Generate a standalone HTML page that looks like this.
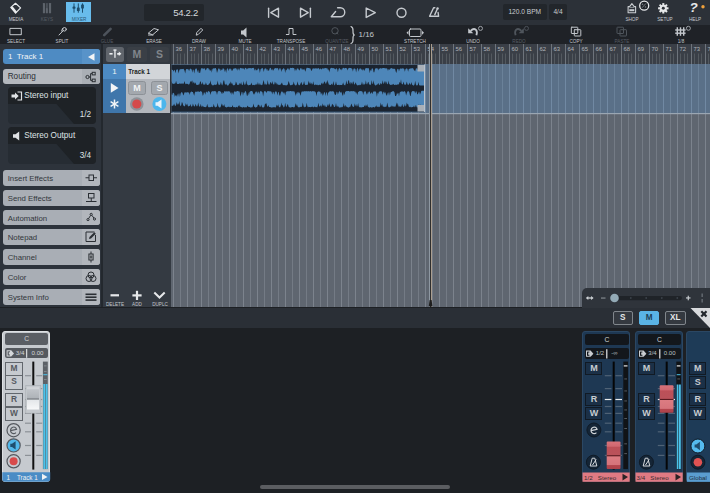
<!DOCTYPE html><html><head><meta charset="utf-8"><style>
*{margin:0;padding:0;box-sizing:border-box}
html,body{width:710px;height:493px;overflow:hidden;background:#1d2024;font-family:"Liberation Sans",sans-serif}
.a{position:absolute}
.lb{position:absolute;font-size:5.4px;color:#c3c7cc;text-align:center;width:40px;line-height:6px;white-space:nowrap;transform:scaleX(0.86)}
.dim{color:#575d65}
.box{position:absolute;background:#22262b;border-radius:2px;color:#c9cdd1;text-align:center;white-space:nowrap}
.ib{position:absolute;left:3px;width:96.7px;height:15.8px;background:#a9aeb5;border-radius:3px;color:#33373c;font-size:7.8px;line-height:17.4px;padding-left:4.7px;overflow:hidden}
.ib .ic{position:absolute;right:0;top:0;width:17.5px;height:100%;background:#b2b6bc}
.ib svg{position:absolute;right:3px;top:2px}
.rl{position:absolute;font-size:5.9px;color:#b0b5bb;top:45.2px;line-height:8px}
svg{position:absolute;overflow:visible}
</style></head><body>
<div class="a" style="left:0;top:0;width:710px;height:25px;background:#2c3138"></div>
<div class="a" style="left:66px;top:2px;width:25px;height:20px;background:#68bcec"></div>
<svg style="left:0;top:0" width="710" height="25" viewBox="0 0 710 25">
<g fill="#e8eaec">
 <path d="M15.5 3.3 L20.6 7.9 L15.6 13.2 L10.8 7.4 Z" fill="none" stroke="#e9ebed" stroke-width="1.2" stroke-linejoin="round"/>
 <path d="M10.8 7.4 L15.6 13.2 L17 11.7 L12.7 6.6 Z" fill="#e9ebed"/>
</g>
<g fill="#5d636b">
 <rect x="42.9" y="3.1" width="2.1" height="10.2" rx="0.5"/>
 <rect x="45.8" y="8" width="2.1" height="5.3" rx="0.5"/>
 <rect x="48.9" y="3.1" width="2.2" height="10.2" rx="0.5"/>
</g><rect x="45.8" y="3.1" width="2.1" height="4.9" fill="#4a5058"/>
<g fill="#1d4d6c">
 <rect x="73.5" y="3.4" width="1" height="9.3"/><rect x="77.8" y="3.4" width="1" height="9.3"/><rect x="82" y="3.4" width="1" height="9.3"/>
 <rect x="72.6" y="6.6" width="2.8" height="2.2" rx="0.6"/>
 <rect x="76.9" y="7.4" width="2.8" height="3.6" rx="0.6"/>
 <rect x="81.1" y="4.6" width="2.8" height="3.9" rx="0.6"/>
</g>
<g stroke="#c6cacf" stroke-width="1.4" fill="none" stroke-linejoin="round" stroke-linecap="round">
 <line x1="268.6" y1="8.2" x2="268.6" y2="17.2"/>
 <path d="M278.5 8.2 L270.8 12.7 L278.5 17.2 Z"/>
 <line x1="310.4" y1="8.2" x2="310.4" y2="17.2"/>
 <path d="M300.5 8.2 L308.2 12.7 L300.5 17.2 Z"/>
 <path d="M335.6 11.5 L331.3 16.7 L340.3 16.7 A4.45 4.45 0 0 0 340.3 7.8 L337.6 7.8"/>
 <path d="M366.2 8 L375.3 12.7 L366.2 17.4 Z"/>
 <circle cx="401.5" cy="12.7" r="4.5"/>
 <path d="M438.1 12.5 L438.6 16.3 L429.6 16.3 L433.6 7.7 L434.8 7.7"/>
 <line x1="434.8" y1="14.6" x2="437.4" y2="8.8"/>
</g>
<path d="M628.1 12.7 V6.6 H629.6 L631.9 3.6 L634.2 6.6 H635.6 V12.7 Z" stroke="#c9cdd1" stroke-width="1.1" fill="none" stroke-linejoin="round"/>
<rect x="629.3" y="9.2" width="5" height="2" fill="#c9cdd1"/><rect x="629.6" y="6.9" width="4.4" height="1" fill="#8a8f94"/>
<circle cx="644.2" cy="5.7" r="4.5" fill="#1f2328" stroke="#e6e8ea" stroke-width="1.3"/>
<path d="M642 7.8 L646 3.4" stroke="#7d8288" stroke-width="0.9"/>
<circle cx="642.5" cy="4.2" r="0.8" fill="#7d8288"/><circle cx="645.5" cy="7" r="0.8" fill="#7d8288"/>
<g transform="translate(663.3 8.3) scale(0.93)">
 <circle r="3.9" fill="#e6e8ea"/>
 <g fill="#e6e8ea"><rect x="-1.1" y="-5.6" width="2.2" height="11.2"/><rect x="-5.6" y="-1.1" width="11.2" height="2.2"/>
 <rect x="-1.1" y="-5.6" width="2.2" height="11.2" transform="rotate(45)"/><rect x="-1.1" y="-5.6" width="2.2" height="11.2" transform="rotate(-45)"/></g>
 <circle r="1.6" fill="#2c3138"/>
</g>
<circle cx="437.6" cy="8.4" r="1.2" fill="#c6cacf"/><circle cx="703" cy="6.8" r="1.7" fill="#f0a13c"/>
</svg>
<div class="a" style="left:689.6px;top:0px;font-size:13.5px;font-weight:bold;font-style:italic;color:#e6e8ea;line-height:16px">?</div>
<div class="lb " style="left:-4.5px;top:16px;">MEDIA</div>
<div class="lb dim" style="left:27px;top:16px;">KEYS</div>
<div class="lb " style="left:58.5px;top:16px;color:#2a5878">MIXER</div>
<div class="lb" style="left:612px;top:16px">SHOP</div>
<div class="lb" style="left:644.5px;top:16px">SETUP</div>
<div class="lb" style="left:674.5px;top:16px">HELP</div>
<div class="box" style="left:143.5px;top:3.7px;width:60px;height:17px;font-size:9.6px;letter-spacing:-0.35px;line-height:17.5px;text-align:right;padding-right:5.6px;color:#d6d9dc">54.2.2</div>
<div class="box" style="left:503px;top:3.7px;width:43.5px;height:16.5px;font-size:6.6px;line-height:16.5px">120.0 BPM</div>
<div class="box" style="left:549px;top:3.7px;width:18px;height:16.5px;font-size:6.6px;line-height:16.5px">4/4</div>
<div class="a" style="left:0;top:25px;width:710px;height:19px;background:#1f2227"></div>
<svg style="left:0;top:25px" width="710" height="19" viewBox="0 25 710 19">
<g stroke="#c3c7cc" stroke-width="1" fill="none" stroke-linejoin="round" stroke-linecap="round">
 <rect x="10.3" y="28.4" width="11" height="6.3"/>
 <circle cx="64.5" cy="29.3" r="1.8"/><line x1="63.3" y1="30.6" x2="59" y2="35"/><line x1="62.5" y1="28.6" x2="61.7" y2="31"/>
 <path d="M148.5 33 L154 28.5 L158.5 29.8 L153 34.5 Z"/><line x1="148.5" y1="35" x2="153" y2="35"/>
 <path d="M196.3 34.8 L196.8 32.5 L201 28.3 L202.7 30 L198.5 34.2 Z"/>
 <path d="M286.3 34.5 H289 V28.5 H293 V34.5 H296"/>
 <path d="M351 26.5 Q353.3 27.5 353 31 Q352.8 34.5 354.3 35 Q352.8 35.5 353 39 Q353.3 42.5 351 43.5" stroke-width="1.2"/>
 <rect x="409.5" y="29" width="11.5" height="7.5" rx="1"/>
 <rect x="571.3" y="27.2" width="6.5" height="6.3" rx="0.5"/><rect x="574.3" y="29.7" width="6.5" height="6.3" rx="0.5"/>
 <g stroke-width="1.4" stroke-linecap="butt"><line x1="677.3" y1="27.3" x2="677.3" y2="35.8"/><line x1="680.5" y1="27.3" x2="680.5" y2="35.8"/><line x1="683.7" y1="27.3" x2="683.7" y2="35.8"/>
 <line x1="675.2" y1="30" x2="685.6" y2="30"/><line x1="675.2" y1="33.2" x2="685.6" y2="33.2"/></g>
</g>
<path d="M20 34.8 L21.3 34.8 L21.3 33.5 Z" fill="#c3c7cc"/>
<path d="M468.2 28.3 L468.2 33.3 L473.3 33.3 Z" fill="#c3c7cc"/><path d="M470.6 30.9 Q473.6 27.8 476 29.9 Q477.6 31.7 476.4 35.3" stroke="#c3c7cc" stroke-width="1.8" fill="none"/>
<path d="M241 31 h2.2 l3.3 -3 v10 l-3.3 -3 h-2.2 z" fill="#c3c7cc" transform="translate(0 -0.5)"/>
<path d="M406.5 32.7 L408.5 30.7 L408.5 34.7 Z M424 32.7 L422 30.7 L422 34.7 Z" fill="#c3c7cc"/>
<g stroke="#4f555c" stroke-width="1" fill="none">
 <circle cx="335" cy="30.8" r="3.2"/><line x1="336.5" y1="32.5" x2="338" y2="34.3"/>
 <rect x="617" y="27.2" width="6.5" height="6.3" rx="0.5"/><rect x="620" y="29.7" width="6.5" height="6.3" rx="0.5"/>
</g>
<line x1="104.2" y1="35.2" x2="110.6" y2="28.8" stroke="#4d535b" stroke-width="2.6" stroke-linecap="round"/><path d="M523.8 28.3 L523.8 33.3 L518.7 33.3 Z" fill="#4f555c"/><path d="M521.4 30.9 Q518.4 27.8 516 29.9 Q514.4 31.7 515.6 35.3" stroke="#4f555c" stroke-width="1.8" fill="none"/>
<circle cx="480.5" cy="28.4" r="2" fill="none" stroke="#a9aeb3" stroke-width="0.9"/>
<circle cx="526.5" cy="28.4" r="2" fill="none" stroke="#4f555c" stroke-width="0.9"/>
<circle cx="688.4" cy="28.3" r="2" fill="none" stroke="#a9aeb3" stroke-width="0.9"/>
</svg>
<div class="a" style="left:358.5px;top:29.5px;font-size:8px;color:#c3c7cc;line-height:9px">1/16</div>
<div class="lb " style="left:-4.300000000000001px;top:37.5px">SELECT</div>
<div class="lb " style="left:41.7px;top:37.5px">SPLIT</div>
<div class="lb dim" style="left:87px;top:37.5px">GLUE</div>
<div class="lb " style="left:133.5px;top:37.5px">ERASE</div>
<div class="lb " style="left:179px;top:37.5px">DRAW</div>
<div class="lb " style="left:225px;top:37.5px">MUTE</div>
<div class="lb " style="left:271px;top:37.5px">TRANSPOSE</div>
<div class="lb dim" style="left:317px;top:37.5px">QUANTIZE</div>
<div class="lb " style="left:395px;top:37.5px">STRETCH</div>
<div class="lb " style="left:452.7px;top:37.5px">UNDO</div>
<div class="lb dim" style="left:499px;top:37.5px">REDO</div>
<div class="lb " style="left:556.2px;top:37.5px">COPY</div>
<div class="lb dim" style="left:602px;top:37.5px">PASTE</div>
<div class="lb " style="left:660.5px;top:37.5px">1/8</div>
<div class="a" style="left:0;top:44px;width:103px;height:263px;background:#2d333b"></div>
<div class="a" style="left:101px;top:44px;width:2px;height:263px;background:#23282e"></div>
<div class="a" style="left:3px;top:48.6px;width:96.7px;height:15.6px;background:#4e8bc3;border-radius:3px;overflow:hidden"><div class="a" style="left:79.2px;top:0;width:17.5px;height:100%;background:#5893c9"></div><div class="a" style="left:5px;top:0;font-size:8px;line-height:15.6px;color:#f2f4f6">1&nbsp; Track 1</div><svg style="left:83.5px;top:4px" width="10" height="9"><path d="M1 4 L7.5 0.3 L7.5 7.7 Z" fill="#f2f4f6"/></svg></div>
<div class="ib" style="top:68.5px;background:#b4b8be;line-height:15.6px;font-size:8.2px;color:#2b2f34">Routing<div class="ic" style="background:#aaafb5"></div><svg width="12" height="12" style="right:3px;top:2px"><g stroke="#2b2f34" stroke-width="1" fill="none"><circle cx="2.5" cy="6" r="1.6"/><rect x="7.2" y="1.3" width="3" height="2.6"/><rect x="7.2" y="8.1" width="3" height="2.6"/><path d="M4.1 6 H5.6 M5.6 2.6 V9.4 M5.6 2.6 H7.2 M5.6 9.4 H7.2"/></g></svg></div>
<div class="a" style="left:7.7px;top:86.5px;width:88.8px;height:37px;background:#262c33;border-radius:4px;overflow:hidden"><div class="a" style="left:0;top:0;width:100%;height:17.2px;background:#1e2226"></div><svg style="left:0;top:0" width="89" height="37"><path d="M48.5 17 L89 17 L89 37 L66 37 Z" fill="#1e2226"/></svg><div class="a" style="left:16.5px;top:0;font-size:8.2px;line-height:17.2px;color:#dfe2e5">Stereo input</div><div class="a" style="left:72px;top:22.5px;font-size:8.2px;line-height:11px;color:#dfe2e5">1/2</div>
<svg style="left:3.5px;top:4px" width="12" height="10"><g fill="none" stroke="#dfe2e5" stroke-width="1.2"><path d="M6.5 1 H10.5 V9 H6.5"/></g><path d="M0.5 3.5 H4 V1.5 L7.7 5 L4 8.5 V6.5 H0.5 Z" fill="#dfe2e5"/></svg>
</div>
<div class="a" style="left:7.7px;top:127.3px;width:88.8px;height:37px;background:#262c33;border-radius:4px;overflow:hidden"><div class="a" style="left:0;top:0;width:100%;height:17.2px;background:#1e2226"></div><svg style="left:0;top:0" width="89" height="37"><path d="M48.5 17 L89 17 L89 37 L66 37 Z" fill="#1e2226"/></svg><div class="a" style="left:16.5px;top:0;font-size:8.2px;line-height:17.2px;color:#dfe2e5">Stereo Output</div><div class="a" style="left:72px;top:22.5px;font-size:8.2px;line-height:11px;color:#dfe2e5">3/4</div>
<svg style="left:4px;top:3.5px" width="10" height="10"><path d="M1 3.3 H3.5 L7.2 0.5 V9.5 L3.5 6.7 H1 Z" fill="#dfe2e5"/></svg>
</div>
<div class="ib" style="top:170.0px">Insert Effects<div class="ic"></div><svg width="12" height="12" style="right:3px;top:2px"><g stroke="#2b2f34" stroke-width="1" fill="none"><rect x="4" y="3" width="4.5" height="5.5"/><line x1="0.5" y1="5.75" x2="4" y2="5.75"/><line x1="8.5" y1="5.75" x2="12" y2="5.75"/></g></svg></div>
<div class="ib" style="top:189.8px">Send Effects<div class="ic"></div><svg width="12" height="12" style="right:3px;top:2px"><g stroke="#2b2f34" stroke-width="1" fill="none"><rect x="3.5" y="1.5" width="5.5" height="4.5"/><line x1="6.25" y1="6" x2="6.25" y2="9"/><line x1="1" y1="9.5" x2="11.5" y2="9.5"/></g></svg></div>
<div class="ib" style="top:209.6px">Automation<div class="ic"></div><svg width="12" height="12" style="right:3px;top:2px"><g stroke="#2b2f34" stroke-width="1" fill="none"><circle cx="3" cy="7.6" r="1.1"/><circle cx="6.2" cy="2.4" r="1.1"/><circle cx="9.5" cy="7" r="1.1"/><line x1="3.6" y1="6.6" x2="5.6" y2="3.4"/><line x1="6.9" y1="3.3" x2="8.9" y2="6.1"/></g></svg></div>
<div class="ib" style="top:229.4px">Notepad<div class="ic"></div><svg width="12" height="12" style="right:3px;top:2px"><g stroke="#2b2f34" stroke-width="1" fill="none"><path d="M9.5 1 H1 V10.5 H10.5 V4"/></g><path d="M4 8 L4.5 6 L9.3 1.2 L10.8 2.7 L6 7.5 Z" fill="#2b2f34"/></svg></div>
<div class="ib" style="top:249.2px">Channel<div class="ic"></div><svg width="12" height="12" style="right:3px;top:2px"><g stroke="#2b2f34" stroke-width="1" fill="none"><rect x="3.9" y="3" width="4.2" height="6"/><line x1="6" y1="0.5" x2="6" y2="3"/><line x1="6" y1="9" x2="6" y2="11.5"/><rect x="5.2" y="5" width="1.6" height="2" stroke-width="0.7"/></g></svg></div>
<div class="ib" style="top:269.0px">Color<div class="ic"></div><svg width="12" height="12" style="right:3px;top:2px"><g stroke="#2b2f34" stroke-width="1" fill="none"><circle cx="6" cy="4" r="3"/><circle cx="4" cy="7.5" r="3"/><circle cx="8" cy="7.5" r="3"/></g></svg></div>
<div class="ib" style="top:288.8px">System Info<div class="ic"></div><svg width="12" height="12" style="right:3px;top:2px"><g fill="#2b2f34"><rect x="0.5" y="2.5" width="11" height="1.6"/><rect x="0.5" y="5.4" width="11" height="1.6"/><rect x="0.5" y="8.3" width="11" height="1.6"/></g></svg></div>
<div class="a" style="left:103px;top:44px;width:68px;height:263px;background:#343a42"></div>
<div class="a" style="left:105.5px;top:47.3px;width:18.4px;height:14.6px;background:#60656c;border-radius:2.5px"></div>
<svg style="left:105.5px;top:47.3px" width="19" height="15"><g fill="#eef0f2"><rect x="3.4" y="6" width="3.2" height="1.6"/><rect x="8.3" y="2.6" width="1.3" height="8.2"/><rect x="7.3" y="2.5" width="3.3" height="1.1"/><path d="M11.2 5.9 H12.8 V4.6 L15.4 6.8 L12.8 9 V7.7 H11.2 Z"/></g></svg>
<div class="a" style="left:127.4px;top:47.3px;width:19.2px;height:14.6px;background:#3a3f46;border-radius:2.5px;color:#80858b;font-size:10.5px;font-weight:bold;text-align:center;line-height:14.6px">M</div>
<div class="a" style="left:149.8px;top:47.3px;width:19.2px;height:14.6px;background:#3a3f46;border-radius:2.5px;color:#80858b;font-size:10.5px;font-weight:bold;text-align:center;line-height:14.6px">S</div>
<div class="a" style="left:103px;top:64px;width:23px;height:49px;background:#3f76ab"></div>
<div class="a" style="left:103px;top:64px;width:23px;height:15px;background:#4c8ac3;color:#f0f2f4;font-size:8px;text-align:center;line-height:15px">1</div>
<div class="a" style="left:126px;top:64px;width:44px;height:49px;background:#b3b7bd"></div>
<div class="a" style="left:126px;top:64px;width:44px;height:15px;background:#d2d5d9;color:#1b1e22;font-size:6.3px;font-weight:bold;line-height:15px;padding-left:2.3px">Track 1</div>
<svg style="left:103px;top:64px" width="23" height="49"><path d="M7.8 19 L15.5 23.9 L7.8 28.8 Z" fill="#f2f4f6"/><g stroke="#f2f4f6" stroke-width="1.5"><line x1="11.5" y1="35.5" x2="11.5" y2="44.5"/><line x1="7.6" y1="37.7" x2="15.4" y2="42.3"/><line x1="7.6" y1="42.3" x2="15.4" y2="37.7"/></g></svg>
<div class="a" style="left:128.2px;top:80.5px;width:17.8px;height:14.3px;background:#a3a8ae;border:1px solid #8c9197;border-radius:2.5px;color:#f0f2f4;font-size:9px;font-weight:bold;text-align:center;line-height:12.5px">M</div>
<div class="a" style="left:150.5px;top:80.5px;width:17.8px;height:14.3px;background:#a3a8ae;border:1px solid #8c9197;border-radius:2.5px;color:#f0f2f4;font-size:9px;font-weight:bold;text-align:center;line-height:12.5px">S</div>
<svg style="left:126px;top:94px" width="45" height="19"><circle cx="10.8" cy="10" r="6.8" fill="#8d9298"/><circle cx="10.8" cy="10" r="4.6" fill="#d44a4a"/><circle cx="33.4" cy="10" r="7" fill="#4cb6ec"/><path d="M29.5 8.3 H31.5 L35.5 5.5 V14.5 L31.5 11.7 H29.5 Z" fill="#e9f4fb"/></svg>
<svg style="left:103px;top:285px" width="68" height="22"><g fill="#e6e8ea">
<rect x="7.5" y="9.2" width="8.5" height="2.2"/>
<rect x="29.4" y="9.3" width="9.2" height="2.2"/><rect x="32.9" y="5.8" width="2.2" height="9.2"/>
</g><path d="M51.3 7.5 L56.5 12.5 L61.7 7.5" stroke="#e6e8ea" stroke-width="2" fill="none"/></svg>
<div class="lb" style="left:94.8px;top:300.5px">DELETE</div>
<div class="lb" style="left:116.9px;top:300.5px">ADD</div>
<div class="lb" style="left:139.6px;top:300.5px">DUPLC</div>
<div class="a" style="left:171px;top:44px;width:539px;height:20px;background:#3a3f47"></div>
<div class="a" style="left:171px;top:64px;width:539px;height:243px;background:#5f6670"></div>
<div class="a" style="left:171px;top:64px;width:539px;height:49px;background:#5a7088"></div>
<svg style="left:0;top:0" width="710" height="493" viewBox="0 0 710 493">
<rect x="170" y="44" width="1.3" height="20" fill="#2f343b"/>
<rect x="173" y="44" width="1" height="20" fill="#6e747c"/>
<rect x="177" y="53.5" width="1" height="10.5" fill="#53595f"/>
<rect x="180" y="53.5" width="1" height="10.5" fill="#53595f"/>
<rect x="184" y="53.5" width="1" height="10.5" fill="#53595f"/>
<rect x="187" y="44" width="1" height="20" fill="#6e747c"/>
<rect x="191" y="53.5" width="1" height="10.5" fill="#53595f"/>
<rect x="194" y="53.5" width="1" height="10.5" fill="#53595f"/>
<rect x="198" y="53.5" width="1" height="10.5" fill="#53595f"/>
<rect x="201" y="44" width="1" height="20" fill="#6e747c"/>
<rect x="205" y="53.5" width="1" height="10.5" fill="#53595f"/>
<rect x="208" y="53.5" width="1" height="10.5" fill="#53595f"/>
<rect x="212" y="53.5" width="1" height="10.5" fill="#53595f"/>
<rect x="215" y="44" width="1" height="20" fill="#6e747c"/>
<rect x="219" y="53.5" width="1" height="10.5" fill="#53595f"/>
<rect x="222" y="53.5" width="1" height="10.5" fill="#53595f"/>
<rect x="226" y="53.5" width="1" height="10.5" fill="#53595f"/>
<rect x="229" y="44" width="1" height="20" fill="#6e747c"/>
<rect x="233" y="53.5" width="1" height="10.5" fill="#53595f"/>
<rect x="236" y="53.5" width="1" height="10.5" fill="#53595f"/>
<rect x="240" y="53.5" width="1" height="10.5" fill="#53595f"/>
<rect x="243" y="44" width="1" height="20" fill="#6e747c"/>
<rect x="247" y="53.5" width="1" height="10.5" fill="#53595f"/>
<rect x="250" y="53.5" width="1" height="10.5" fill="#53595f"/>
<rect x="254" y="53.5" width="1" height="10.5" fill="#53595f"/>
<rect x="257" y="44" width="1" height="20" fill="#6e747c"/>
<rect x="261" y="53.5" width="1" height="10.5" fill="#53595f"/>
<rect x="264" y="53.5" width="1" height="10.5" fill="#53595f"/>
<rect x="268" y="53.5" width="1" height="10.5" fill="#53595f"/>
<rect x="271" y="44" width="1" height="20" fill="#6e747c"/>
<rect x="275" y="53.5" width="1" height="10.5" fill="#53595f"/>
<rect x="278" y="53.5" width="1" height="10.5" fill="#53595f"/>
<rect x="282" y="53.5" width="1" height="10.5" fill="#53595f"/>
<rect x="285" y="44" width="1" height="20" fill="#6e747c"/>
<rect x="289" y="53.5" width="1" height="10.5" fill="#53595f"/>
<rect x="292" y="53.5" width="1" height="10.5" fill="#53595f"/>
<rect x="296" y="53.5" width="1" height="10.5" fill="#53595f"/>
<rect x="299" y="44" width="1" height="20" fill="#6e747c"/>
<rect x="303" y="53.5" width="1" height="10.5" fill="#53595f"/>
<rect x="306" y="53.5" width="1" height="10.5" fill="#53595f"/>
<rect x="310" y="53.5" width="1" height="10.5" fill="#53595f"/>
<rect x="313" y="44" width="1" height="20" fill="#6e747c"/>
<rect x="316" y="53.5" width="1" height="10.5" fill="#53595f"/>
<rect x="320" y="53.5" width="1" height="10.5" fill="#53595f"/>
<rect x="323" y="53.5" width="1" height="10.5" fill="#53595f"/>
<rect x="327" y="44" width="1" height="20" fill="#6e747c"/>
<rect x="330" y="53.5" width="1" height="10.5" fill="#53595f"/>
<rect x="334" y="53.5" width="1" height="10.5" fill="#53595f"/>
<rect x="337" y="53.5" width="1" height="10.5" fill="#53595f"/>
<rect x="341" y="44" width="1" height="20" fill="#6e747c"/>
<rect x="344" y="53.5" width="1" height="10.5" fill="#53595f"/>
<rect x="348" y="53.5" width="1" height="10.5" fill="#53595f"/>
<rect x="351" y="53.5" width="1" height="10.5" fill="#53595f"/>
<rect x="355" y="44" width="1" height="20" fill="#6e747c"/>
<rect x="358" y="53.5" width="1" height="10.5" fill="#53595f"/>
<rect x="362" y="53.5" width="1" height="10.5" fill="#53595f"/>
<rect x="365" y="53.5" width="1" height="10.5" fill="#53595f"/>
<rect x="369" y="44" width="1" height="20" fill="#6e747c"/>
<rect x="372" y="53.5" width="1" height="10.5" fill="#53595f"/>
<rect x="376" y="53.5" width="1" height="10.5" fill="#53595f"/>
<rect x="379" y="53.5" width="1" height="10.5" fill="#53595f"/>
<rect x="383" y="44" width="1" height="20" fill="#6e747c"/>
<rect x="386" y="53.5" width="1" height="10.5" fill="#53595f"/>
<rect x="390" y="53.5" width="1" height="10.5" fill="#53595f"/>
<rect x="393" y="53.5" width="1" height="10.5" fill="#53595f"/>
<rect x="397" y="44" width="1" height="20" fill="#6e747c"/>
<rect x="400" y="53.5" width="1" height="10.5" fill="#53595f"/>
<rect x="404" y="53.5" width="1" height="10.5" fill="#53595f"/>
<rect x="407" y="53.5" width="1" height="10.5" fill="#53595f"/>
<rect x="411" y="44" width="1" height="20" fill="#6e747c"/>
<rect x="414" y="53.5" width="1" height="10.5" fill="#53595f"/>
<rect x="418" y="53.5" width="1" height="10.5" fill="#53595f"/>
<rect x="421" y="53.5" width="1" height="10.5" fill="#53595f"/>
<rect x="425" y="44" width="1" height="20" fill="#6e747c"/>
<rect x="428" y="53.5" width="1" height="10.5" fill="#53595f"/>
<rect x="432" y="53.5" width="1" height="10.5" fill="#53595f"/>
<rect x="435" y="53.5" width="1" height="10.5" fill="#53595f"/>
<rect x="439" y="44" width="1" height="20" fill="#6e747c"/>
<rect x="442" y="53.5" width="1" height="10.5" fill="#53595f"/>
<rect x="446" y="53.5" width="1" height="10.5" fill="#53595f"/>
<rect x="449" y="53.5" width="1" height="10.5" fill="#53595f"/>
<rect x="453" y="44" width="1" height="20" fill="#6e747c"/>
<rect x="456" y="53.5" width="1" height="10.5" fill="#53595f"/>
<rect x="460" y="53.5" width="1" height="10.5" fill="#53595f"/>
<rect x="463" y="53.5" width="1" height="10.5" fill="#53595f"/>
<rect x="467" y="44" width="1" height="20" fill="#6e747c"/>
<rect x="470" y="53.5" width="1" height="10.5" fill="#53595f"/>
<rect x="474" y="53.5" width="1" height="10.5" fill="#53595f"/>
<rect x="477" y="53.5" width="1" height="10.5" fill="#53595f"/>
<rect x="481" y="44" width="1" height="20" fill="#6e747c"/>
<rect x="484" y="53.5" width="1" height="10.5" fill="#53595f"/>
<rect x="488" y="53.5" width="1" height="10.5" fill="#53595f"/>
<rect x="491" y="53.5" width="1" height="10.5" fill="#53595f"/>
<rect x="495" y="44" width="1" height="20" fill="#6e747c"/>
<rect x="498" y="53.5" width="1" height="10.5" fill="#53595f"/>
<rect x="502" y="53.5" width="1" height="10.5" fill="#53595f"/>
<rect x="505" y="53.5" width="1" height="10.5" fill="#53595f"/>
<rect x="509" y="44" width="1" height="20" fill="#6e747c"/>
<rect x="512" y="53.5" width="1" height="10.5" fill="#53595f"/>
<rect x="516" y="53.5" width="1" height="10.5" fill="#53595f"/>
<rect x="519" y="53.5" width="1" height="10.5" fill="#53595f"/>
<rect x="523" y="44" width="1" height="20" fill="#6e747c"/>
<rect x="526" y="53.5" width="1" height="10.5" fill="#53595f"/>
<rect x="530" y="53.5" width="1" height="10.5" fill="#53595f"/>
<rect x="533" y="53.5" width="1" height="10.5" fill="#53595f"/>
<rect x="537" y="44" width="1" height="20" fill="#6e747c"/>
<rect x="540" y="53.5" width="1" height="10.5" fill="#53595f"/>
<rect x="544" y="53.5" width="1" height="10.5" fill="#53595f"/>
<rect x="547" y="53.5" width="1" height="10.5" fill="#53595f"/>
<rect x="551" y="44" width="1" height="20" fill="#6e747c"/>
<rect x="554" y="53.5" width="1" height="10.5" fill="#53595f"/>
<rect x="558" y="53.5" width="1" height="10.5" fill="#53595f"/>
<rect x="561" y="53.5" width="1" height="10.5" fill="#53595f"/>
<rect x="565" y="44" width="1" height="20" fill="#6e747c"/>
<rect x="568" y="53.5" width="1" height="10.5" fill="#53595f"/>
<rect x="572" y="53.5" width="1" height="10.5" fill="#53595f"/>
<rect x="575" y="53.5" width="1" height="10.5" fill="#53595f"/>
<rect x="579" y="44" width="1" height="20" fill="#6e747c"/>
<rect x="582" y="53.5" width="1" height="10.5" fill="#53595f"/>
<rect x="586" y="53.5" width="1" height="10.5" fill="#53595f"/>
<rect x="589" y="53.5" width="1" height="10.5" fill="#53595f"/>
<rect x="593" y="44" width="1" height="20" fill="#6e747c"/>
<rect x="596" y="53.5" width="1" height="10.5" fill="#53595f"/>
<rect x="600" y="53.5" width="1" height="10.5" fill="#53595f"/>
<rect x="603" y="53.5" width="1" height="10.5" fill="#53595f"/>
<rect x="607" y="44" width="1" height="20" fill="#6e747c"/>
<rect x="610" y="53.5" width="1" height="10.5" fill="#53595f"/>
<rect x="614" y="53.5" width="1" height="10.5" fill="#53595f"/>
<rect x="617" y="53.5" width="1" height="10.5" fill="#53595f"/>
<rect x="621" y="44" width="1" height="20" fill="#6e747c"/>
<rect x="624" y="53.5" width="1" height="10.5" fill="#53595f"/>
<rect x="628" y="53.5" width="1" height="10.5" fill="#53595f"/>
<rect x="631" y="53.5" width="1" height="10.5" fill="#53595f"/>
<rect x="635" y="44" width="1" height="20" fill="#6e747c"/>
<rect x="638" y="53.5" width="1" height="10.5" fill="#53595f"/>
<rect x="642" y="53.5" width="1" height="10.5" fill="#53595f"/>
<rect x="645" y="53.5" width="1" height="10.5" fill="#53595f"/>
<rect x="649" y="44" width="1" height="20" fill="#6e747c"/>
<rect x="652" y="53.5" width="1" height="10.5" fill="#53595f"/>
<rect x="656" y="53.5" width="1" height="10.5" fill="#53595f"/>
<rect x="659" y="53.5" width="1" height="10.5" fill="#53595f"/>
<rect x="663" y="44" width="1" height="20" fill="#6e747c"/>
<rect x="666" y="53.5" width="1" height="10.5" fill="#53595f"/>
<rect x="670" y="53.5" width="1" height="10.5" fill="#53595f"/>
<rect x="673" y="53.5" width="1" height="10.5" fill="#53595f"/>
<rect x="677" y="44" width="1" height="20" fill="#6e747c"/>
<rect x="680" y="53.5" width="1" height="10.5" fill="#53595f"/>
<rect x="684" y="53.5" width="1" height="10.5" fill="#53595f"/>
<rect x="687" y="53.5" width="1" height="10.5" fill="#53595f"/>
<rect x="691" y="44" width="1" height="20" fill="#6e747c"/>
<rect x="694" y="53.5" width="1" height="10.5" fill="#53595f"/>
<rect x="698" y="53.5" width="1" height="10.5" fill="#53595f"/>
<rect x="701" y="53.5" width="1" height="10.5" fill="#53595f"/>
<rect x="705" y="44" width="1" height="20" fill="#6e747c"/>
<rect x="708" y="53.5" width="1" height="10.5" fill="#53595f"/>
<rect x="712" y="53.5" width="1" height="10.5" fill="#53595f"/>
<rect x="715" y="53.5" width="1" height="10.5" fill="#53595f"/>
<rect x="173" y="64" width="1" height="49" fill="#7189a3"/>
<rect x="173" y="113" width="1" height="194" fill="#7c838d"/>
<rect x="180" y="64" width="1" height="49" fill="#6a8199"/>
<rect x="180" y="113" width="1" height="194" fill="#747b85"/>
<rect x="187" y="64" width="1" height="49" fill="#7189a3"/>
<rect x="187" y="113" width="1" height="194" fill="#7c838d"/>
<rect x="194" y="64" width="1" height="49" fill="#6a8199"/>
<rect x="194" y="113" width="1" height="194" fill="#747b85"/>
<rect x="201" y="64" width="1" height="49" fill="#7189a3"/>
<rect x="201" y="113" width="1" height="194" fill="#7c838d"/>
<rect x="208" y="64" width="1" height="49" fill="#6a8199"/>
<rect x="208" y="113" width="1" height="194" fill="#747b85"/>
<rect x="215" y="64" width="1" height="49" fill="#7189a3"/>
<rect x="215" y="113" width="1" height="194" fill="#7c838d"/>
<rect x="222" y="64" width="1" height="49" fill="#6a8199"/>
<rect x="222" y="113" width="1" height="194" fill="#747b85"/>
<rect x="229" y="64" width="1" height="49" fill="#7189a3"/>
<rect x="229" y="113" width="1" height="194" fill="#7c838d"/>
<rect x="236" y="64" width="1" height="49" fill="#6a8199"/>
<rect x="236" y="113" width="1" height="194" fill="#747b85"/>
<rect x="243" y="64" width="1" height="49" fill="#7189a3"/>
<rect x="243" y="113" width="1" height="194" fill="#7c838d"/>
<rect x="250" y="64" width="1" height="49" fill="#6a8199"/>
<rect x="250" y="113" width="1" height="194" fill="#747b85"/>
<rect x="257" y="64" width="1" height="49" fill="#7189a3"/>
<rect x="257" y="113" width="1" height="194" fill="#7c838d"/>
<rect x="264" y="64" width="1" height="49" fill="#6a8199"/>
<rect x="264" y="113" width="1" height="194" fill="#747b85"/>
<rect x="271" y="64" width="1" height="49" fill="#7189a3"/>
<rect x="271" y="113" width="1" height="194" fill="#7c838d"/>
<rect x="278" y="64" width="1" height="49" fill="#6a8199"/>
<rect x="278" y="113" width="1" height="194" fill="#747b85"/>
<rect x="285" y="64" width="1" height="49" fill="#7189a3"/>
<rect x="285" y="113" width="1" height="194" fill="#7c838d"/>
<rect x="292" y="64" width="1" height="49" fill="#6a8199"/>
<rect x="292" y="113" width="1" height="194" fill="#747b85"/>
<rect x="299" y="64" width="1" height="49" fill="#7189a3"/>
<rect x="299" y="113" width="1" height="194" fill="#7c838d"/>
<rect x="306" y="64" width="1" height="49" fill="#6a8199"/>
<rect x="306" y="113" width="1" height="194" fill="#747b85"/>
<rect x="313" y="64" width="1" height="49" fill="#7189a3"/>
<rect x="313" y="113" width="1" height="194" fill="#7c838d"/>
<rect x="320" y="64" width="1" height="49" fill="#6a8199"/>
<rect x="320" y="113" width="1" height="194" fill="#747b85"/>
<rect x="327" y="64" width="1" height="49" fill="#7189a3"/>
<rect x="327" y="113" width="1" height="194" fill="#7c838d"/>
<rect x="334" y="64" width="1" height="49" fill="#6a8199"/>
<rect x="334" y="113" width="1" height="194" fill="#747b85"/>
<rect x="341" y="64" width="1" height="49" fill="#7189a3"/>
<rect x="341" y="113" width="1" height="194" fill="#7c838d"/>
<rect x="348" y="64" width="1" height="49" fill="#6a8199"/>
<rect x="348" y="113" width="1" height="194" fill="#747b85"/>
<rect x="355" y="64" width="1" height="49" fill="#7189a3"/>
<rect x="355" y="113" width="1" height="194" fill="#7c838d"/>
<rect x="362" y="64" width="1" height="49" fill="#6a8199"/>
<rect x="362" y="113" width="1" height="194" fill="#747b85"/>
<rect x="369" y="64" width="1" height="49" fill="#7189a3"/>
<rect x="369" y="113" width="1" height="194" fill="#7c838d"/>
<rect x="376" y="64" width="1" height="49" fill="#6a8199"/>
<rect x="376" y="113" width="1" height="194" fill="#747b85"/>
<rect x="383" y="64" width="1" height="49" fill="#7189a3"/>
<rect x="383" y="113" width="1" height="194" fill="#7c838d"/>
<rect x="390" y="64" width="1" height="49" fill="#6a8199"/>
<rect x="390" y="113" width="1" height="194" fill="#747b85"/>
<rect x="397" y="64" width="1" height="49" fill="#7189a3"/>
<rect x="397" y="113" width="1" height="194" fill="#7c838d"/>
<rect x="404" y="64" width="1" height="49" fill="#6a8199"/>
<rect x="404" y="113" width="1" height="194" fill="#747b85"/>
<rect x="411" y="64" width="1" height="49" fill="#7189a3"/>
<rect x="411" y="113" width="1" height="194" fill="#7c838d"/>
<rect x="418" y="64" width="1" height="49" fill="#6a8199"/>
<rect x="418" y="113" width="1" height="194" fill="#747b85"/>
<rect x="425" y="64" width="1" height="49" fill="#7189a3"/>
<rect x="425" y="113" width="1" height="194" fill="#7c838d"/>
<rect x="432" y="64" width="1" height="49" fill="#6a8199"/>
<rect x="432" y="113" width="1" height="194" fill="#747b85"/>
<rect x="439" y="64" width="1" height="49" fill="#7189a3"/>
<rect x="439" y="113" width="1" height="194" fill="#7c838d"/>
<rect x="446" y="64" width="1" height="49" fill="#6a8199"/>
<rect x="446" y="113" width="1" height="194" fill="#747b85"/>
<rect x="453" y="64" width="1" height="49" fill="#7189a3"/>
<rect x="453" y="113" width="1" height="194" fill="#7c838d"/>
<rect x="460" y="64" width="1" height="49" fill="#6a8199"/>
<rect x="460" y="113" width="1" height="194" fill="#747b85"/>
<rect x="467" y="64" width="1" height="49" fill="#7189a3"/>
<rect x="467" y="113" width="1" height="194" fill="#7c838d"/>
<rect x="474" y="64" width="1" height="49" fill="#6a8199"/>
<rect x="474" y="113" width="1" height="194" fill="#747b85"/>
<rect x="481" y="64" width="1" height="49" fill="#7189a3"/>
<rect x="481" y="113" width="1" height="194" fill="#7c838d"/>
<rect x="488" y="64" width="1" height="49" fill="#6a8199"/>
<rect x="488" y="113" width="1" height="194" fill="#747b85"/>
<rect x="495" y="64" width="1" height="49" fill="#7189a3"/>
<rect x="495" y="113" width="1" height="194" fill="#7c838d"/>
<rect x="502" y="64" width="1" height="49" fill="#6a8199"/>
<rect x="502" y="113" width="1" height="194" fill="#747b85"/>
<rect x="509" y="64" width="1" height="49" fill="#7189a3"/>
<rect x="509" y="113" width="1" height="194" fill="#7c838d"/>
<rect x="516" y="64" width="1" height="49" fill="#6a8199"/>
<rect x="516" y="113" width="1" height="194" fill="#747b85"/>
<rect x="523" y="64" width="1" height="49" fill="#7189a3"/>
<rect x="523" y="113" width="1" height="194" fill="#7c838d"/>
<rect x="530" y="64" width="1" height="49" fill="#6a8199"/>
<rect x="530" y="113" width="1" height="194" fill="#747b85"/>
<rect x="537" y="64" width="1" height="49" fill="#7189a3"/>
<rect x="537" y="113" width="1" height="194" fill="#7c838d"/>
<rect x="544" y="64" width="1" height="49" fill="#6a8199"/>
<rect x="544" y="113" width="1" height="194" fill="#747b85"/>
<rect x="551" y="64" width="1" height="49" fill="#7189a3"/>
<rect x="551" y="113" width="1" height="194" fill="#7c838d"/>
<rect x="558" y="64" width="1" height="49" fill="#6a8199"/>
<rect x="558" y="113" width="1" height="194" fill="#747b85"/>
<rect x="565" y="64" width="1" height="49" fill="#7189a3"/>
<rect x="565" y="113" width="1" height="194" fill="#7c838d"/>
<rect x="572" y="64" width="1" height="49" fill="#6a8199"/>
<rect x="572" y="113" width="1" height="194" fill="#747b85"/>
<rect x="579" y="64" width="1" height="49" fill="#7189a3"/>
<rect x="579" y="113" width="1" height="194" fill="#7c838d"/>
<rect x="586" y="64" width="1" height="49" fill="#6a8199"/>
<rect x="586" y="113" width="1" height="194" fill="#747b85"/>
<rect x="593" y="64" width="1" height="49" fill="#7189a3"/>
<rect x="593" y="113" width="1" height="194" fill="#7c838d"/>
<rect x="600" y="64" width="1" height="49" fill="#6a8199"/>
<rect x="600" y="113" width="1" height="194" fill="#747b85"/>
<rect x="607" y="64" width="1" height="49" fill="#7189a3"/>
<rect x="607" y="113" width="1" height="194" fill="#7c838d"/>
<rect x="614" y="64" width="1" height="49" fill="#6a8199"/>
<rect x="614" y="113" width="1" height="194" fill="#747b85"/>
<rect x="621" y="64" width="1" height="49" fill="#7189a3"/>
<rect x="621" y="113" width="1" height="194" fill="#7c838d"/>
<rect x="628" y="64" width="1" height="49" fill="#6a8199"/>
<rect x="628" y="113" width="1" height="194" fill="#747b85"/>
<rect x="635" y="64" width="1" height="49" fill="#7189a3"/>
<rect x="635" y="113" width="1" height="194" fill="#7c838d"/>
<rect x="642" y="64" width="1" height="49" fill="#6a8199"/>
<rect x="642" y="113" width="1" height="194" fill="#747b85"/>
<rect x="649" y="64" width="1" height="49" fill="#7189a3"/>
<rect x="649" y="113" width="1" height="194" fill="#7c838d"/>
<rect x="656" y="64" width="1" height="49" fill="#6a8199"/>
<rect x="656" y="113" width="1" height="194" fill="#747b85"/>
<rect x="663" y="64" width="1" height="49" fill="#7189a3"/>
<rect x="663" y="113" width="1" height="194" fill="#7c838d"/>
<rect x="670" y="64" width="1" height="49" fill="#6a8199"/>
<rect x="670" y="113" width="1" height="194" fill="#747b85"/>
<rect x="677" y="64" width="1" height="49" fill="#7189a3"/>
<rect x="677" y="113" width="1" height="194" fill="#7c838d"/>
<rect x="684" y="64" width="1" height="49" fill="#6a8199"/>
<rect x="684" y="113" width="1" height="194" fill="#747b85"/>
<rect x="691" y="64" width="1" height="49" fill="#7189a3"/>
<rect x="691" y="113" width="1" height="194" fill="#7c838d"/>
<rect x="698" y="64" width="1" height="49" fill="#6a8199"/>
<rect x="698" y="113" width="1" height="194" fill="#747b85"/>
<rect x="705" y="64" width="1" height="49" fill="#7189a3"/>
<rect x="705" y="113" width="1" height="194" fill="#7c838d"/>
<rect x="171" y="113" width="539" height="1.2" fill="#9aa6b2"/>
</svg>
<div class="rl" style="left:175.5px">36</div>
<div class="rl" style="left:189.5px">37</div>
<div class="rl" style="left:203.5px">38</div>
<div class="rl" style="left:217.5px">39</div>
<div class="rl" style="left:231.5px">40</div>
<div class="rl" style="left:245.5px">41</div>
<div class="rl" style="left:259.5px">42</div>
<div class="rl" style="left:273.5px">43</div>
<div class="rl" style="left:287.5px">44</div>
<div class="rl" style="left:301.5px">45</div>
<div class="rl" style="left:315.5px">46</div>
<div class="rl" style="left:329.5px">47</div>
<div class="rl" style="left:343.5px">48</div>
<div class="rl" style="left:357.5px">49</div>
<div class="rl" style="left:371.5px">50</div>
<div class="rl" style="left:385.5px">51</div>
<div class="rl" style="left:399.5px">52</div>
<div class="rl" style="left:413.5px">53</div>
<div class="rl" style="left:427.5px">54</div>
<div class="rl" style="left:441.5px">55</div>
<div class="rl" style="left:455.5px">56</div>
<div class="rl" style="left:469.5px">57</div>
<div class="rl" style="left:483.5px">58</div>
<div class="rl" style="left:497.5px">59</div>
<div class="rl" style="left:511.5px">60</div>
<div class="rl" style="left:525.5px">61</div>
<div class="rl" style="left:539.5px">62</div>
<div class="rl" style="left:553.5px">63</div>
<div class="rl" style="left:567.5px">64</div>
<div class="rl" style="left:581.5px">65</div>
<div class="rl" style="left:595.5px">66</div>
<div class="rl" style="left:609.5px">67</div>
<div class="rl" style="left:623.5px">68</div>
<div class="rl" style="left:637.5px">69</div>
<div class="rl" style="left:651.5px">70</div>
<div class="rl" style="left:665.5px">71</div>
<div class="rl" style="left:679.5px">72</div>
<div class="rl" style="left:693.5px">73</div>
<div class="rl" style="left:707.5px">74</div>
<div class="a" style="left:171.5px;top:64.8px;width:253.2px;height:47.0px;background:#4d86b9"></div>
<svg style="left:0;top:0" width="710" height="493" viewBox="0 0 710 493"><g fill="#1b2430">
<path d="M171.5 64.8 L424.7 64.8 L424.4 67.6 L423.7 69.0 L423.1 67.8 L422.4 70.8 L421.8 68.0 L421.1 67.6 L420.5 67.7 L419.8 67.6 L419.1 67.6 L418.5 67.6 L417.9 68.0 L417.2 70.0 L416.6 68.1 L415.9 68.4 L415.2 71.2 L414.6 70.5 L414.0 70.3 L413.3 68.4 L412.6 68.3 L412.0 68.1 L411.4 68.4 L410.7 68.3 L410.1 68.7 L409.4 68.7 L408.8 68.9 L408.1 71.7 L407.5 69.0 L406.8 68.2 L406.1 68.7 L405.5 69.1 L404.9 71.7 L404.2 69.1 L403.6 68.6 L402.9 68.5 L402.2 68.3 L401.6 68.7 L401.0 68.4 L400.3 68.5 L399.6 69.2 L399.0 71.6 L398.4 69.1 L397.7 68.8 L397.1 69.6 L396.4 73.1 L395.8 71.8 L395.1 69.1 L394.5 68.7 L393.8 68.8 L393.1 68.8 L392.5 68.7 L391.9 68.1 L391.2 68.3 L390.6 68.4 L389.9 68.8 L389.2 70.3 L388.6 68.8 L388.0 71.1 L387.3 68.8 L386.6 68.2 L386.0 68.4 L385.4 68.3 L384.7 68.2 L384.1 67.9 L383.4 67.9 L382.8 68.3 L382.1 68.1 L381.5 68.8 L380.8 68.1 L380.1 68.6 L379.5 68.7 L378.9 68.6 L378.2 70.6 L377.6 68.6 L376.9 68.1 L376.2 68.5 L375.6 68.3 L375.0 69.1 L374.3 72.2 L373.6 72.3 L373.0 69.1 L372.4 68.3 L371.7 68.8 L371.1 71.2 L370.4 69.4 L369.8 73.3 L369.1 69.4 L368.5 67.9 L367.8 68.1 L367.1 68.6 L366.5 68.1 L365.9 68.0 L365.2 68.8 L364.6 71.3 L363.9 68.7 L363.2 70.3 L362.6 70.5 L362.0 68.5 L361.3 69.9 L360.6 68.3 L360.0 68.4 L359.4 68.8 L358.7 71.7 L358.1 68.8 L357.4 67.9 L356.8 69.1 L356.1 72.5 L355.5 69.1 L354.8 68.4 L354.1 68.6 L353.5 68.8 L352.9 71.6 L352.2 68.8 L351.6 68.5 L350.9 67.9 L350.2 68.0 L349.6 67.9 L349.0 67.8 L348.3 68.5 L347.6 70.5 L347.0 68.5 L346.4 68.3 L345.7 68.0 L345.1 67.9 L344.4 68.5 L343.8 68.0 L343.1 67.8 L342.5 68.5 L341.8 70.5 L341.1 68.5 L340.5 70.1 L339.9 68.4 L339.2 68.0 L338.6 69.0 L337.9 72.2 L337.2 69.0 L336.6 68.2 L336.0 68.5 L335.3 69.6 L334.6 68.4 L334.0 68.5 L333.4 67.9 L332.7 68.1 L332.1 68.2 L331.4 67.8 L330.8 67.9 L330.1 69.1 L329.5 72.6 L328.8 69.1 L328.1 70.8 L327.5 68.6 L326.9 67.9 L326.2 68.5 L325.6 68.1 L324.9 68.0 L324.2 68.4 L323.6 68.4 L323.0 68.5 L322.3 68.3 L321.6 69.7 L321.0 68.6 L320.4 68.4 L319.7 69.8 L319.1 68.5 L318.4 68.0 L317.8 68.6 L317.1 68.4 L316.5 68.4 L315.8 68.0 L315.1 68.7 L314.5 68.6 L313.9 68.2 L313.2 68.5 L312.6 68.5 L311.9 70.3 L311.2 70.9 L310.6 68.7 L310.0 68.2 L309.3 68.2 L308.6 68.0 L308.0 68.0 L307.4 67.8 L306.7 67.7 L306.1 68.9 L305.4 71.8 L304.8 70.2 L304.1 68.5 L303.5 70.0 L302.8 68.4 L302.1 70.2 L301.5 68.4 L300.9 68.0 L300.2 68.5 L299.6 70.6 L298.9 69.9 L298.2 68.5 L297.6 68.4 L296.9 68.5 L296.3 70.7 L295.6 68.8 L295.0 71.5 L294.4 68.8 L293.7 68.0 L293.1 68.1 L292.4 67.7 L291.8 68.0 L291.1 67.9 L290.4 67.8 L289.8 68.5 L289.1 70.5 L288.5 68.5 L287.9 68.5 L287.2 68.4 L286.6 70.4 L285.9 69.2 L285.2 73.0 L284.6 69.2 L283.9 68.2 L283.3 68.3 L282.6 69.7 L282.0 68.9 L281.4 71.9 L280.7 68.9 L280.1 68.1 L279.4 68.6 L278.8 70.8 L278.1 68.6 L277.4 67.9 L276.8 68.6 L276.1 67.9 L275.5 67.9 L274.9 68.5 L274.2 68.6 L273.6 71.1 L272.9 68.6 L272.2 70.5 L271.6 70.0 L270.9 68.3 L270.3 67.8 L269.6 68.5 L269.0 70.7 L268.4 70.7 L267.7 68.7 L267.1 71.2 L266.4 68.7 L265.8 68.6 L265.1 68.2 L264.4 68.9 L263.8 71.9 L263.1 68.9 L262.5 67.8 L261.9 68.4 L261.2 68.6 L260.6 69.2 L259.9 72.9 L259.2 69.2 L258.6 68.4 L257.9 68.5 L257.3 70.2 L256.6 69.8 L256.0 70.9 L255.4 68.6 L254.7 70.8 L254.1 68.6 L253.4 67.8 L252.8 68.0 L252.1 68.1 L251.4 68.4 L250.8 67.9 L250.2 68.3 L249.5 67.9 L248.9 68.4 L248.2 67.9 L247.6 68.4 L246.9 69.5 L246.2 68.2 L245.6 67.7 L244.9 68.3 L244.3 70.1 L243.7 68.4 L243.0 68.2 L242.4 68.4 L241.7 68.3 L241.1 68.3 L240.4 67.8 L239.8 68.5 L239.1 70.7 L238.4 68.5 L237.8 68.6 L237.2 70.8 L236.5 68.6 L235.9 68.5 L235.2 67.9 L234.6 68.5 L233.9 68.5 L233.2 68.7 L232.6 71.2 L231.9 68.7 L231.3 71.2 L230.7 68.7 L230.0 68.6 L229.3 68.7 L228.7 71.3 L228.1 68.7 L227.4 68.2 L226.8 69.2 L226.1 73.0 L225.4 69.2 L224.8 72.1 L224.2 69.0 L223.5 68.5 L222.8 68.3 L222.2 69.9 L221.6 70.2 L220.9 68.7 L220.2 71.3 L219.6 68.7 L218.9 68.4 L218.3 68.6 L217.7 70.7 L217.0 72.9 L216.3 69.2 L215.7 68.1 L215.1 67.9 L214.4 68.6 L213.8 68.4 L213.1 68.3 L212.4 69.2 L211.8 72.7 L211.2 69.2 L210.5 71.2 L209.8 68.7 L209.2 70.8 L208.6 68.6 L207.9 68.0 L207.2 68.3 L206.6 68.5 L205.9 70.5 L205.3 69.7 L204.7 68.3 L204.0 68.4 L203.3 68.7 L202.7 68.3 L202.1 68.4 L201.4 68.0 L200.8 69.4 L200.1 73.0 L199.4 73.1 L198.8 69.5 L198.2 73.0 L197.5 71.2 L196.8 68.9 L196.2 68.2 L195.6 68.7 L194.9 69.7 L194.2 73.6 L193.6 69.8 L192.9 69.5 L192.3 72.7 L191.7 69.6 L191.0 69.1 L190.3 68.6 L189.7 69.3 L189.1 71.2 L188.4 69.3 L187.8 69.2 L187.1 68.9 L186.4 69.1 L185.8 70.0 L185.2 73.4 L184.5 70.6 L183.8 69.3 L183.2 68.8 L182.6 68.9 L181.9 69.3 L181.2 69.0 L180.6 69.2 L179.9 69.2 L179.3 70.3 L178.7 73.6 L178.0 70.3 L177.3 69.1 L176.7 69.5 L176.1 70.2 L175.4 73.2 L174.8 70.2 L174.1 69.8 L173.4 71.7 L172.8 69.8 L172.2 69.9 L171.5 69.2 Z"/>
<path d="M171.5 81.1 L172.2 83.3 L172.8 83.7 L173.4 83.9 L174.1 83.4 L174.8 83.7 L175.4 83.2 L176.1 80.7 L176.7 83.2 L177.3 84.0 L178.0 84.1 L178.7 84.1 L179.3 83.5 L179.9 83.5 L180.6 83.7 L181.2 83.4 L181.9 83.7 L182.6 83.6 L183.2 83.7 L183.8 83.4 L184.5 81.0 L185.2 83.5 L185.8 84.3 L186.4 83.7 L187.1 83.7 L187.8 83.9 L188.4 84.5 L189.1 84.6 L189.7 83.6 L190.3 80.7 L191.0 82.6 L191.7 80.9 L192.3 80.4 L192.9 83.7 L193.6 81.6 L194.2 84.1 L194.9 82.2 L195.6 82.9 L196.2 84.5 L196.8 84.9 L197.5 84.9 L198.2 84.6 L198.8 84.8 L199.4 84.2 L200.1 81.6 L200.8 81.6 L201.4 84.3 L202.1 84.3 L202.7 81.8 L203.3 84.4 L204.0 84.8 L204.7 84.5 L205.3 84.5 L205.9 82.3 L206.6 84.6 L207.2 85.0 L207.9 85.1 L208.6 84.8 L209.2 83.1 L209.8 84.0 L210.5 80.3 L211.2 84.0 L211.8 84.7 L212.4 85.3 L213.1 85.4 L213.8 84.9 L214.4 84.6 L215.1 84.9 L215.7 84.7 L216.3 84.8 L217.0 84.1 L217.7 80.6 L218.3 84.1 L218.9 85.0 L219.6 84.8 L220.2 84.4 L220.9 81.7 L221.6 84.4 L222.2 85.4 L222.8 84.1 L223.5 80.5 L224.2 80.6 L224.8 84.1 L225.4 84.9 L226.1 83.4 L226.8 84.9 L227.4 85.5 L228.1 85.4 L228.7 84.9 L229.3 83.1 L230.0 84.3 L230.7 81.2 L231.3 84.3 L231.9 82.2 L232.6 84.6 L233.2 85.0 L233.9 85.4 L234.6 85.1 L235.2 84.4 L235.9 81.6 L236.5 82.8 L237.2 84.7 L237.8 85.0 L238.4 84.7 L239.1 84.8 L239.8 82.8 L240.4 84.5 L241.1 82.0 L241.7 84.5 L242.4 85.3 L243.0 84.2 L243.7 81.0 L244.3 84.2 L244.9 84.9 L245.6 84.0 L246.2 80.2 L246.9 84.0 L247.6 84.8 L248.2 85.4 L248.9 85.0 L249.5 84.9 L250.2 85.1 L250.8 84.6 L251.4 82.4 L252.1 84.7 L252.8 85.3 L253.4 85.0 L254.1 84.7 L254.7 85.3 L255.4 85.0 L256.0 83.6 L256.6 84.8 L257.3 84.5 L257.9 82.1 L258.6 84.5 L259.2 84.9 L259.9 83.1 L260.6 84.9 L261.2 84.7 L261.9 85.3 L262.5 84.5 L263.1 82.1 L263.8 80.0 L264.4 83.9 L265.1 84.9 L265.8 83.3 L266.4 84.9 L267.1 84.0 L267.7 80.1 L268.4 84.0 L269.0 84.7 L269.6 84.5 L270.3 82.0 L270.9 82.5 L271.6 84.2 L272.2 80.9 L272.9 83.4 L273.6 84.6 L274.2 84.4 L274.9 81.6 L275.5 82.8 L276.1 84.7 L276.8 82.5 L277.4 84.6 L278.1 84.6 L278.8 85.1 L279.4 84.9 L280.1 84.6 L280.7 84.7 L281.4 83.2 L282.0 82.4 L282.6 84.6 L283.3 85.1 L283.9 85.3 L284.6 84.9 L285.2 85.4 L285.9 85.1 L286.6 85.4 L287.2 84.9 L287.9 84.2 L288.5 81.1 L289.1 82.3 L289.8 84.6 L290.4 85.4 L291.1 84.8 L291.8 85.2 L292.4 84.7 L293.1 84.3 L293.7 81.4 L294.4 84.3 L295.0 84.9 L295.6 85.4 L296.3 85.3 L296.9 84.3 L297.6 81.2 L298.2 84.3 L298.9 85.2 L299.6 85.3 L300.2 84.6 L300.9 82.8 L301.5 81.9 L302.1 84.5 L302.8 85.0 L303.5 83.5 L304.1 81.1 L304.8 84.3 L305.4 85.1 L306.1 85.1 L306.7 84.8 L307.4 85.1 L308.0 84.0 L308.6 80.5 L309.3 84.0 L310.0 81.5 L310.6 84.3 L311.2 82.6 L311.9 84.6 L312.6 84.2 L313.2 81.3 L313.9 84.2 L314.5 85.2 L315.1 84.7 L315.8 84.6 L316.5 85.1 L317.1 84.6 L317.8 85.2 L318.4 85.2 L319.1 84.8 L319.7 84.8 L320.4 85.2 L321.0 84.6 L321.6 82.5 L322.3 84.6 L323.0 82.3 L323.6 84.2 L324.2 81.2 L324.9 81.9 L325.6 84.3 L326.2 81.3 L326.9 83.8 L327.5 79.7 L328.1 82.2 L328.8 84.6 L329.5 84.8 L330.1 85.0 L330.8 85.0 L331.4 83.5 L332.1 85.0 L332.7 84.2 L333.4 81.0 L334.0 84.2 L334.6 85.4 L335.3 84.3 L336.0 81.3 L336.6 84.3 L337.2 85.1 L337.9 85.1 L338.6 84.8 L339.2 85.2 L339.9 84.8 L340.5 85.0 L341.1 85.0 L341.8 85.0 L342.5 84.6 L343.1 82.2 L343.8 84.6 L344.4 85.0 L345.1 85.4 L345.7 84.0 L346.4 80.2 L347.0 84.0 L347.6 84.1 L348.3 80.5 L349.0 80.3 L349.6 84.0 L350.2 81.8 L350.9 84.5 L351.6 81.9 L352.2 84.4 L352.9 81.8 L353.5 81.4 L354.1 84.3 L354.8 84.6 L355.5 82.2 L356.1 83.5 L356.8 84.9 L357.4 85.4 L358.1 85.1 L358.7 85.2 L359.4 85.3 L360.0 84.6 L360.6 85.3 L361.3 84.3 L362.0 81.4 L362.6 84.3 L363.2 84.9 L363.9 83.3 L364.6 84.8 L365.2 83.9 L365.9 80.2 L366.5 83.9 L367.1 84.6 L367.8 82.5 L368.5 81.8 L369.1 84.4 L369.8 84.5 L370.4 85.2 L371.1 83.8 L371.7 80.0 L372.4 83.8 L373.0 83.9 L373.6 80.2 L374.3 83.9 L375.0 85.2 L375.6 85.4 L376.2 85.2 L376.9 84.6 L377.6 84.6 L378.2 82.7 L378.9 84.6 L379.5 85.0 L380.1 84.6 L380.8 82.7 L381.5 84.6 L382.1 83.2 L382.8 80.2 L383.4 83.9 L384.1 83.3 L384.7 81.2 L385.4 81.4 L386.0 84.2 L386.6 81.3 L387.3 84.2 L388.0 83.9 L388.6 80.4 L389.2 83.9 L389.9 84.4 L390.6 85.1 L391.2 85.1 L391.9 84.6 L392.5 84.8 L393.1 83.7 L393.8 84.6 L394.5 85.0 L395.1 85.0 L395.8 84.4 L396.4 84.9 L397.1 84.6 L397.7 84.6 L398.4 84.6 L399.0 84.1 L399.6 81.8 L400.3 83.3 L401.0 79.3 L401.6 83.4 L402.2 84.5 L402.9 84.0 L403.6 81.4 L404.2 84.1 L404.9 85.1 L405.5 84.7 L406.1 84.1 L406.8 81.4 L407.5 84.2 L408.1 85.1 L408.8 84.5 L409.4 82.4 L410.1 84.6 L410.7 84.4 L411.4 81.9 L412.0 84.5 L412.6 85.0 L413.3 85.5 L414.0 85.5 L414.6 84.3 L415.2 80.7 L415.9 84.4 L416.6 85.6 L417.2 85.6 L417.9 84.7 L418.5 81.7 L419.1 84.9 L419.8 85.6 L420.5 85.6 L421.1 85.5 L421.8 85.5 L422.4 85.6 L423.1 85.6 L423.7 85.6 L424.4 85.6 L424.4 90.7 L423.7 90.7 L423.1 90.7 L422.4 90.7 L421.8 90.7 L421.1 91.3 L420.5 94.5 L419.8 91.4 L419.1 94.6 L418.5 91.5 L417.9 94.3 L417.2 94.3 L416.6 91.5 L415.9 91.3 L415.2 93.6 L414.6 91.4 L414.0 91.0 L413.3 91.2 L412.6 90.9 L412.0 91.6 L411.4 92.2 L410.7 95.8 L410.1 95.9 L409.4 92.4 L408.8 91.5 L408.1 91.1 L407.5 91.6 L406.8 93.1 L406.1 95.5 L405.5 92.4 L404.9 91.3 L404.2 91.3 L403.6 91.8 L402.9 91.7 L402.2 91.3 L401.6 91.5 L401.0 91.4 L400.3 92.0 L399.6 92.8 L399.0 96.5 L398.4 92.8 L397.7 94.3 L397.1 92.4 L396.4 95.3 L395.8 95.9 L395.1 96.1 L394.5 92.6 L393.8 91.3 L393.1 91.2 L392.5 91.3 L391.9 91.8 L391.2 91.9 L390.6 92.3 L389.9 95.5 L389.2 92.3 L388.6 92.4 L388.0 95.8 L387.3 92.4 L386.6 96.0 L386.0 94.5 L385.4 92.0 L384.7 93.5 L384.1 91.6 L383.4 92.0 L382.8 94.7 L382.1 92.0 L381.5 91.3 L380.8 91.5 L380.1 91.1 L379.5 91.7 L378.9 91.8 L378.2 94.1 L377.6 92.6 L376.9 96.7 L376.2 92.6 L375.6 91.2 L375.0 91.8 L374.3 91.3 L373.6 91.6 L373.0 91.9 L372.4 94.3 L371.7 91.9 L371.1 93.0 L370.4 94.1 L369.8 91.8 L369.1 91.4 L368.5 92.0 L367.8 94.6 L367.1 92.0 L366.5 94.9 L365.9 92.0 L365.2 91.1 L364.6 91.6 L363.9 92.1 L363.2 95.1 L362.6 92.0 L362.0 91.2 L361.3 91.2 L360.6 91.0 L360.0 91.3 L359.4 91.1 L358.7 91.7 L358.1 92.1 L357.4 95.3 L356.8 92.1 L356.1 94.0 L355.5 91.7 L354.8 91.4 L354.1 91.6 L353.5 91.0 L352.9 91.2 L352.2 91.2 L351.6 91.0 L350.9 91.5 L350.2 91.0 L349.6 91.7 L349.0 91.1 L348.3 90.9 L347.6 91.0 L347.0 91.3 L346.4 90.9 L345.7 91.4 L345.1 92.0 L344.4 95.2 L343.8 92.1 L343.1 95.4 L342.5 95.5 L341.8 93.1 L341.1 91.5 L340.5 92.9 L339.9 91.4 L339.2 91.2 L338.6 92.4 L337.9 94.7 L337.2 91.9 L336.6 91.8 L336.0 94.5 L335.3 95.1 L334.6 94.2 L334.0 91.7 L333.4 91.4 L332.7 91.2 L332.1 91.3 L331.4 91.4 L330.8 91.5 L330.1 91.0 L329.5 91.4 L328.8 92.6 L328.1 92.4 L327.5 96.3 L326.9 92.4 L326.2 92.3 L325.6 96.0 L324.9 92.3 L324.2 92.2 L323.6 95.5 L323.0 92.3 L322.3 96.0 L321.6 92.4 L321.0 94.7 L320.4 92.0 L319.7 91.6 L319.1 91.7 L318.4 91.3 L317.8 91.7 L317.1 92.5 L316.5 96.2 L315.8 92.5 L315.1 91.5 L314.5 91.6 L313.9 91.1 L313.2 91.5 L312.6 91.0 L311.9 91.6 L311.2 91.6 L310.6 91.0 L310.0 91.2 L309.3 91.5 L308.6 91.0 L308.0 91.4 L307.4 91.2 L306.7 91.1 L306.1 91.6 L305.4 91.3 L304.8 90.9 L304.1 91.5 L303.5 91.6 L302.8 91.6 L302.1 91.5 L301.5 91.7 L300.9 94.2 L300.2 95.8 L299.6 92.2 L298.9 93.3 L298.2 91.7 L297.6 91.9 L296.9 94.8 L296.3 92.3 L295.6 95.9 L295.0 93.1 L294.4 91.4 L293.7 91.0 L293.1 91.7 L292.4 91.0 L291.8 91.6 L291.1 91.1 L290.4 90.9 L289.8 91.0 L289.1 91.6 L288.5 91.3 L287.9 91.0 L287.2 91.6 L286.6 91.4 L285.9 92.1 L285.2 95.4 L284.6 93.3 L283.9 91.7 L283.3 93.8 L282.6 91.7 L282.0 91.5 L281.4 91.5 L280.7 93.3 L280.1 95.7 L279.4 95.2 L278.8 92.1 L278.1 92.2 L277.4 95.6 L276.8 92.2 L276.1 91.3 L275.5 91.4 L274.9 91.9 L274.2 94.7 L273.6 91.9 L272.9 91.8 L272.2 94.4 L271.6 91.8 L270.9 91.4 L270.3 91.3 L269.6 91.6 L269.0 91.0 L268.4 91.3 L267.7 90.9 L267.1 91.4 L266.4 93.0 L265.8 91.6 L265.1 91.2 L264.4 91.0 L263.8 92.4 L263.1 96.4 L262.5 92.4 L261.9 91.4 L261.2 91.5 L260.6 91.0 L259.9 91.7 L259.2 94.1 L258.6 91.7 L257.9 91.6 L257.3 93.8 L256.6 91.6 L256.0 91.5 L255.4 91.9 L254.7 94.7 L254.1 92.8 L253.4 94.8 L252.8 91.9 L252.1 91.0 L251.4 90.9 L250.8 91.1 L250.2 91.5 L249.5 92.1 L248.9 95.3 L248.2 92.2 L247.6 95.7 L246.9 95.7 L246.2 92.2 L245.6 90.9 L244.9 91.5 L244.3 93.2 L243.7 92.2 L243.0 95.7 L242.4 92.2 L241.7 91.8 L241.1 94.3 L240.4 96.4 L239.8 92.4 L239.1 91.1 L238.4 91.5 L237.8 90.9 L237.2 91.0 L236.5 91.6 L235.9 91.4 L235.2 91.7 L234.6 91.3 L233.9 92.0 L233.2 95.1 L232.6 92.0 L231.9 94.9 L231.3 91.9 L230.7 93.8 L230.0 91.6 L229.3 91.6 L228.7 91.3 L228.1 91.3 L227.4 91.4 L226.8 91.2 L226.1 91.4 L225.4 91.4 L224.8 91.0 L224.2 91.6 L223.5 93.4 L222.8 91.7 L222.2 94.1 L221.6 93.4 L220.9 91.5 L220.2 91.7 L219.6 91.0 L218.9 90.9 L218.3 91.3 L217.7 92.0 L217.0 95.0 L216.3 92.0 L215.7 91.3 L215.1 91.2 L214.4 91.1 L213.8 91.4 L213.1 91.1 L212.4 91.3 L211.8 91.4 L211.2 92.0 L210.5 94.9 L209.8 92.0 L209.2 91.6 L208.6 91.0 L207.9 91.5 L207.2 93.1 L206.6 91.5 L205.9 92.0 L205.3 94.8 L204.7 93.0 L204.0 92.1 L203.3 95.1 L202.7 95.7 L202.1 92.3 L201.4 91.5 L200.8 91.1 L200.1 91.4 L199.4 91.9 L198.8 91.5 L198.2 91.4 L197.5 91.6 L196.8 91.7 L196.2 91.8 L195.6 91.4 L194.9 92.5 L194.2 95.7 L193.6 93.9 L192.9 92.1 L192.3 92.0 L191.7 91.6 L191.0 91.8 L190.3 92.5 L189.7 95.0 L189.1 92.6 L188.4 92.5 L187.8 92.2 L187.1 92.3 L186.4 92.6 L185.8 92.7 L185.2 92.0 L184.5 92.6 L183.8 94.6 L183.2 95.4 L182.6 92.9 L181.9 92.1 L181.2 92.6 L180.6 93.5 L179.9 97.1 L179.3 93.5 L178.7 93.5 L178.0 97.0 L177.3 93.5 L176.7 96.7 L176.1 94.9 L175.4 95.4 L174.8 96.7 L174.1 93.4 L173.4 92.7 L172.8 93.0 L172.2 95.3 L171.5 94.0 Z"/>
<path d="M171.5 105.7 L172.2 106.1 L172.8 105.4 L173.4 105.5 L174.1 103.6 L174.8 105.6 L175.4 105.9 L176.1 105.0 L176.7 101.9 L177.3 105.1 L178.0 103.0 L178.7 104.8 L179.3 101.0 L179.9 104.8 L180.6 106.3 L181.2 105.2 L181.9 102.0 L182.6 103.0 L183.2 105.5 L183.8 105.7 L184.5 106.4 L185.2 105.5 L185.8 103.0 L186.4 105.6 L187.1 103.5 L187.8 105.8 L188.4 106.5 L189.1 105.9 L189.7 105.9 L190.3 103.9 L191.0 106.1 L191.7 106.7 L192.3 106.0 L192.9 103.5 L193.6 105.6 L194.2 106.6 L194.9 106.2 L195.6 103.7 L196.2 105.6 L196.8 106.4 L197.5 105.9 L198.2 102.4 L198.8 105.3 L199.4 106.7 L200.1 106.3 L200.8 103.7 L201.4 106.4 L202.1 106.9 L202.7 105.4 L203.3 106.6 L204.0 107.1 L204.7 106.9 L205.3 107.2 L205.9 107.0 L206.6 106.5 L207.2 103.8 L207.9 106.5 L208.6 107.3 L209.2 107.4 L209.8 107.0 L210.5 107.2 L211.2 106.7 L211.8 106.8 L212.4 107.3 L213.1 106.5 L213.8 103.7 L214.4 106.5 L215.1 106.9 L215.7 107.5 L216.3 107.0 L217.0 106.2 L217.7 102.8 L218.3 106.2 L218.9 106.9 L219.6 107.4 L220.2 107.5 L220.9 106.3 L221.6 103.2 L222.2 106.3 L222.8 104.1 L223.5 106.6 L224.2 104.0 L224.8 106.6 L225.4 106.9 L226.1 107.3 L226.8 107.4 L227.4 107.0 L228.1 106.8 L228.7 106.8 L229.3 106.8 L230.0 107.4 L230.7 106.8 L231.3 107.0 L231.9 106.9 L232.6 105.0 L233.2 106.9 L233.9 107.3 L234.6 107.1 L235.2 107.5 L235.9 107.3 L236.5 106.7 L237.2 107.4 L237.8 107.0 L238.4 105.3 L239.1 106.9 L239.8 105.0 L240.4 106.9 L241.1 106.9 L241.7 107.3 L242.4 107.5 L243.0 107.4 L243.7 106.8 L244.3 107.4 L244.9 107.3 L245.6 107.2 L246.2 107.5 L246.9 107.1 L247.6 105.6 L248.2 106.8 L248.9 106.9 L249.5 107.1 L250.2 107.4 L250.8 107.6 L251.4 107.3 L252.1 107.5 L252.8 106.5 L253.4 103.6 L254.1 106.5 L254.7 107.1 L255.4 107.5 L256.0 107.5 L256.6 106.9 L257.3 106.8 L257.9 104.7 L258.6 104.7 L259.2 105.1 L259.9 106.9 L260.6 106.8 L261.2 104.6 L261.9 106.8 L262.5 107.5 L263.1 107.3 L263.8 107.4 L264.4 106.4 L265.1 103.3 L265.8 104.3 L266.4 103.1 L267.1 106.3 L267.7 106.7 L268.4 105.0 L269.0 106.9 L269.6 107.0 L270.3 107.1 L270.9 107.5 L271.6 107.6 L272.2 107.6 L272.9 107.3 L273.6 107.3 L274.2 107.0 L274.9 107.5 L275.5 107.6 L276.1 106.8 L276.8 104.6 L277.4 106.6 L278.1 104.2 L278.8 106.6 L279.4 107.3 L280.1 107.3 L280.7 106.1 L281.4 102.4 L282.0 106.1 L282.6 104.8 L283.3 106.8 L283.9 107.6 L284.6 106.2 L285.2 102.7 L285.9 106.2 L286.6 106.9 L287.2 105.1 L287.9 104.1 L288.5 106.6 L289.1 107.3 L289.8 107.2 L290.4 107.5 L291.1 107.5 L291.8 107.0 L292.4 106.9 L293.1 107.0 L293.7 107.4 L294.4 107.3 L295.0 106.3 L295.6 103.1 L296.3 106.3 L296.9 103.9 L297.6 106.6 L298.2 107.0 L298.9 107.5 L299.6 107.3 L300.2 106.8 L300.9 107.1 L301.5 107.0 L302.1 106.1 L302.8 102.5 L303.5 106.1 L304.1 107.4 L304.8 106.8 L305.4 106.9 L306.1 106.2 L306.7 102.7 L307.4 106.2 L308.0 107.4 L308.6 106.8 L309.3 106.9 L310.0 107.0 L310.6 107.3 L311.2 106.7 L311.9 107.1 L312.6 106.6 L313.2 107.2 L313.9 107.3 L314.5 106.6 L315.1 106.8 L315.8 107.3 L316.5 107.0 L317.1 107.4 L317.8 106.1 L318.4 102.7 L319.1 106.1 L319.7 106.8 L320.4 105.1 L321.0 106.8 L321.6 106.3 L322.3 103.3 L323.0 106.4 L323.6 104.6 L324.2 106.8 L324.9 104.6 L325.6 106.8 L326.2 106.8 L326.9 106.9 L327.5 105.0 L328.1 104.0 L328.8 106.3 L329.5 103.1 L330.1 106.3 L330.8 106.9 L331.4 106.5 L332.1 103.8 L332.7 104.4 L333.4 104.9 L334.0 106.9 L334.6 107.1 L335.3 106.3 L336.0 103.0 L336.6 106.3 L337.2 106.9 L337.9 105.4 L338.6 107.0 L339.2 107.4 L339.9 107.4 L340.5 107.4 L341.1 106.8 L341.8 107.4 L342.5 106.9 L343.1 106.3 L343.8 103.1 L344.4 106.3 L345.1 106.8 L345.7 104.7 L346.4 106.8 L347.0 107.1 L347.6 107.3 L348.3 107.6 L349.0 107.4 L349.6 106.7 L350.2 106.9 L350.9 105.1 L351.6 103.6 L352.2 105.7 L352.9 106.7 L353.5 107.0 L354.1 106.4 L354.8 103.3 L355.5 106.4 L356.1 103.9 L356.8 106.6 L357.4 106.3 L358.1 103.1 L358.7 106.3 L359.4 107.4 L360.0 106.7 L360.6 107.4 L361.3 107.3 L362.0 107.4 L362.6 107.0 L363.2 107.0 L363.9 106.9 L364.6 105.0 L365.2 106.7 L365.9 104.4 L366.5 106.5 L367.1 103.9 L367.8 106.5 L368.5 107.1 L369.1 107.4 L369.8 107.4 L370.4 107.1 L371.1 107.4 L371.7 107.4 L372.4 107.4 L373.0 106.9 L373.6 107.1 L374.3 107.4 L375.0 107.3 L375.6 106.6 L376.2 105.3 L376.9 106.9 L377.6 106.8 L378.2 106.6 L378.9 107.3 L379.5 107.0 L380.1 106.0 L380.8 102.5 L381.5 106.0 L382.1 103.8 L382.8 106.4 L383.4 106.7 L384.1 106.5 L384.7 107.2 L385.4 106.6 L386.0 107.2 L386.6 106.0 L387.3 102.5 L388.0 106.0 L388.6 107.3 L389.2 107.2 L389.9 107.2 L390.6 106.6 L391.2 106.8 L391.9 105.3 L392.5 106.5 L393.1 106.5 L393.8 106.4 L394.5 106.5 L395.1 107.1 L395.8 105.8 L396.4 102.3 L397.1 105.8 L397.7 102.8 L398.4 105.9 L399.0 106.9 L399.6 106.2 L400.3 106.5 L401.0 106.9 L401.6 106.1 L402.2 103.7 L402.9 106.2 L403.6 107.1 L404.2 106.3 L404.9 104.1 L405.5 106.4 L406.1 105.9 L406.8 102.6 L407.5 104.4 L408.1 103.9 L408.8 106.4 L409.4 107.3 L410.1 106.6 L410.7 107.3 L411.4 107.2 L412.0 107.3 L412.6 106.9 L413.3 107.1 L414.0 105.6 L414.6 107.2 L415.2 107.0 L415.9 104.7 L416.6 107.1 L417.2 107.7 L417.9 107.1 L418.5 104.7 L419.1 104.5 L419.8 107.1 L420.5 104.3 L421.1 106.1 L421.8 107.7 L422.4 107.7 L423.1 107.7 L423.7 107.7 L424.4 107.7 L424.7 111.8 L171.5 111.8 Z"/>
</g>
<rect x="417.5" y="65" width="7" height="6.5" fill="#a9b0b8"/><rect x="417.5" y="105" width="7" height="6.5" fill="#a9b0b8"/>
<line x1="424.5" y1="64.5" x2="424.5" y2="112" stroke="#b9c2cb" stroke-width="1"/>
<rect x="170" y="64" width="1.3" height="49" fill="#2a2f36"/>
<rect x="429" y="44" width="1" height="263" fill="#8e98a2"/><rect x="430" y="44" width="1" height="263" fill="#2e2e2e"/><rect x="431" y="44" width="1" height="263" fill="#aa9e90"/><path d="M429.6 300 L431.6 300 L432.3 305.5 A1.8 1.8 0 0 1 428.9 305.5 Z" fill="#1e1e1e"/>
</svg>
<div class="a" style="left:582.2px;top:288px;width:128px;height:20px;background:#2f343b;border-radius:5px 0 0 0"></div>
<svg style="left:582px;top:288px" width="128" height="20"><g fill="#d0d4d8">
<path d="M3.8 10 L6.3 7.9 V12.1 Z M11.6 10 L9.1 7.9 V12.1 Z"/><rect x="6" y="9.35" width="3.4" height="1.3"/>
<rect x="19" y="9.5" width="4.5" height="1.1" fill="#8a9096"/>
<rect x="105.7" y="7.7" width="1.1" height="4.6"/><rect x="104" y="9.4" width="4.5" height="1.1"/>
</g>
<rect x="30" y="8" width="70" height="4.2" rx="2.1" fill="#1f2328"/>
<g fill="#3c424a"><circle cx="48.8" cy="10" r="0.9"/><circle cx="64.2" cy="10" r="0.9"/><circle cx="79.8" cy="10" r="0.9"/><circle cx="95.3" cy="10" r="0.9"/></g>
<circle cx="32.5" cy="10" r="4.3" fill="#93aab6"/>
<g fill="#6a7078"><rect x="119.5" y="5.5" width="1.3" height="3.5"/><rect x="119.5" y="11" width="1.3" height="3.5"/></g>
</svg>
<div class="a" style="left:0;top:307.5px;width:710px;height:20.5px;background:#2a2f36"></div>
<div class="a" style="left:612.5px;top:311.3px;width:20.7px;height:13.5px;background:#343940;border:1px solid #80868c;border-radius:2px;color:#e3e6e9;font-size:8.2px;font-weight:bold;text-align:center;line-height:11.5px">S</div>
<div class="a" style="left:638.8px;top:311.3px;width:20.7px;height:13.5px;background:#5ab4e6;border:1px solid #5ab4e6;border-radius:2px;color:#1f3f56;font-size:8.2px;font-weight:bold;text-align:center;line-height:11.5px">M</div>
<div class="a" style="left:665px;top:311.3px;width:20.7px;height:13.5px;background:#343940;border:1px solid #80868c;border-radius:2px;color:#e3e6e9;font-size:8.2px;font-weight:bold;text-align:center;line-height:11.5px">XL</div>
<svg style="left:690px;top:307.5px" width="20" height="21"><path d="M0.5 0 H20 V20 Z" fill="#d8dadd"/><g stroke="#23272d" stroke-width="2.2"><line x1="11.3" y1="3.3" x2="16.5" y2="8.5"/><line x1="16.5" y1="3.3" x2="11.3" y2="8.5"/></g></svg>
<div class="a" style="left:0;top:328px;width:710px;height:165px;background:#1d2024"></div>
<div class="a" style="left:2.3px;top:331px;width:47.9px;height:150.8px;background:#c6cacf;border:1px solid #dde0e3;border-radius:3px"></div>
<div class="a" style="left:4.9px;top:333px;width:43.4px;height:11.5px;background:#5a5e64;border-radius:2px;color:#d0d3d6;font-size:6.8px;line-height:11.9px;text-align:center">C</div>
<div class="a" style="left:4.9px;top:348px;width:43.4px;height:10.2px;background:#55595f;border-radius:2px"></div>
<svg style="left:0;top:340px" width="60" height="20"><path d="M8 10.5 H10.5 V8.7 H8 Z" fill="none"/><path d="M6.6 10.3 H11.2 L14 13.4 L11.2 16.5 H6.6 Z" fill="#d4d7da"/><path d="M7.6 11.3 H10 V15.5 H7.6 Z" fill="#55595f"/><path d="M8.8 12.3 H11 L12.2 13.4 L11 14.5 H8.8 Z" fill="#d4d7da"/><rect x="26.2" y="9" width="1" height="8.8" fill="#f2f4f6"/></svg>
<div class="a" style="left:15.8px;top:348.3px;font-size:6.2px;line-height:10.2px;color:#d4d7da">3/4</div>
<div class="a" style="left:31.5px;top:348.3px;font-size:6.2px;line-height:10.2px;color:#d4d7da">0.00</div>
<div class="a" style="left:5.3px;top:362.3px;width:17.4px;height:14.2px;border:1.3px solid #62676d;color:#55595f;font-size:8.4px;font-weight:bold;text-align:center;line-height:11.6px">M</div>
<div class="a" style="left:5.3px;top:375.4px;width:17.4px;height:14.2px;border:1.3px solid #62676d;color:#55595f;font-size:8.4px;font-weight:bold;text-align:center;line-height:11.6px">S</div>
<div class="a" style="left:5.3px;top:393.3px;width:17.4px;height:14.2px;border:1.3px solid #62676d;color:#55595f;font-size:8.4px;font-weight:bold;text-align:center;line-height:11.6px">R</div>
<div class="a" style="left:5.3px;top:406.5px;width:17.4px;height:14.2px;border:1.3px solid #62676d;color:#55595f;font-size:8.4px;font-weight:bold;text-align:center;line-height:11.6px">W</div>
<svg style="left:0;top:0" width="60" height="493" viewBox="0 0 60 493">
<rect x="25" y="375.09999999999997" width="6" height="1.2" fill="#8c9197"/><rect x="36.2" y="375.09999999999997" width="6" height="1.2" fill="#8c9197"/>
<rect x="25" y="388.0" width="6" height="1.2" fill="#8c9197"/><rect x="36.2" y="388.0" width="6" height="1.2" fill="#8c9197"/>
<rect x="25" y="398.9" width="6" height="1.2" fill="#8c9197"/><rect x="36.2" y="398.9" width="6" height="1.2" fill="#8c9197"/>
<rect x="25" y="405.9" width="6" height="1.2" fill="#8c9197"/><rect x="36.2" y="405.9" width="6" height="1.2" fill="#8c9197"/>
<rect x="25" y="412.79999999999995" width="6" height="1.2" fill="#8c9197"/><rect x="36.2" y="412.79999999999995" width="6" height="1.2" fill="#8c9197"/>
<rect x="25" y="422.59999999999997" width="6" height="1.2" fill="#8c9197"/><rect x="36.2" y="422.59999999999997" width="6" height="1.2" fill="#8c9197"/>
<rect x="25" y="431.2" width="6" height="1.2" fill="#8c9197"/><rect x="36.2" y="431.2" width="6" height="1.2" fill="#8c9197"/>
<rect x="25" y="444.9" width="6" height="1.2" fill="#8c9197"/><rect x="36.2" y="444.9" width="6" height="1.2" fill="#8c9197"/>
<rect x="25" y="454.79999999999995" width="6" height="1.2" fill="#8c9197"/><rect x="36.2" y="454.79999999999995" width="6" height="1.2" fill="#8c9197"/>
<rect x="32.3" y="361.6" width="2" height="108" fill="#111"/>
<rect x="42.9" y="361.6" width="4.9" height="107.5" fill="#5c6167"/>
<rect x="43.3" y="384" width="1.9" height="85" fill="#4cc2ea"/><rect x="45.7" y="384" width="1.9" height="85" fill="#4cc2ea"/>
<rect x="43.3" y="374.2" width="4.1" height="1" fill="#4cc2ea"/>
<rect x="44" y="365.5" width="2.6" height="0.8" fill="#8a8f95"/>
<rect x="44" y="371" width="2.6" height="0.8" fill="#8a8f95"/>
<rect x="44" y="379" width="2.6" height="0.8" fill="#8a8f95"/>
<defs><linearGradient id="fu" x1="0" y1="0" x2="0" y2="1"><stop offset="0" stop-color="#dde0e3"/><stop offset="0.2" stop-color="#bfc3c8"/><stop offset="1" stop-color="#adb2b7"/></linearGradient><linearGradient id="fl" x1="0" y1="0" x2="0" y2="1"><stop offset="0" stop-color="#e3e6e9"/><stop offset="1" stop-color="#f7f8f9"/></linearGradient></defs>
<rect x="25.8" y="385.4" width="15" height="27.8" fill="#c5c9ce" stroke="#a6abb0" stroke-width="0.6"/>
<rect x="27" y="387.6" width="12" height="11" fill="url(#fu)"/>
<rect x="27" y="398.5" width="12" height="1.2" fill="#62676d"/>
<rect x="27" y="399.7" width="12" height="9.8" fill="url(#fl)"/>
<circle cx="13.6" cy="430.2" r="6.6" fill="#c6cacf" stroke="#55595f" stroke-width="1.2"/>
<circle cx="13.6" cy="445.4" r="6.6" fill="#52b8ea" stroke="#55595f" stroke-width="1.2"/>
<path d="M10.3 443.8 H12 L15.6 441.2 V449.6 L12 447 H10.3 Z" fill="#1f4e6e"/>
<circle cx="13.6" cy="461.3" r="6.6" fill="#c6cacf" stroke="#55595f" stroke-width="1.2"/><circle cx="13.6" cy="461.3" r="4" fill="#d84a4a"/>
<path d="M2.3 472.3 H50.2 V479 A2.8 2.8 0 0 1 47.4 481.8 H5.1 A2.8 2.8 0 0 1 2.3 479 Z" fill="#4a8cc5"/>
<path d="M42 473.8 L47.5 476.9 L42 480 Z" fill="#f0f2f4"/>
</svg>
<svg style="left:0;top:0" width="60" height="493" viewBox="0 0 60 493"><path d="M10.6 430.6 L16.6 429.4 A3.1 3.3 0 1 0 15.9 432.6" fill="none" stroke="#55595f" stroke-width="1.1"/></svg>
<div class="a" style="left:6.5px;top:472.6px;font-size:6.3px;line-height:9.2px;color:#eef0f2">1&nbsp;&nbsp;&nbsp;&nbsp;Track 1</div>
<div class="a" style="left:582.3px;top:331px;width:48.2px;height:150.8px;background:#1e3853;border:1px solid #2b4763;border-radius:3px"></div>
<div class="a" style="left:585.1999999999999px;top:333.6px;width:43.6px;height:11.2px;background:#13171c;border-radius:2px;color:#d0d3d6;font-size:6.8px;line-height:11.6px;text-align:center">C</div>
<div class="a" style="left:585.1999999999999px;top:348.2px;width:43.6px;height:11.2px;background:#13171c;border-radius:2px"></div>
<div class="a" style="left:595.8px;top:348.2px;font-size:6px;line-height:11.2px;color:#bfc3c8">1/2</div>
<div class="a" style="left:611.3px;top:348.2px;font-size:6px;line-height:11.2px;color:#bfc3c8">-&#8734;</div>
<div class="a" style="left:585.3px;top:362.3px;width:17.2px;height:13.2px;background:#1b3047;border:1.3px solid #111a24;color:#c8ccd0;font-size:9px;font-weight:bold;text-align:center;line-height:10.6px">M</div>
<div class="a" style="left:585.3px;top:393.3px;width:17.2px;height:13.2px;background:#1b3047;border:1.3px solid #111a24;color:#c8ccd0;font-size:9px;font-weight:bold;text-align:center;line-height:10.6px">R</div>
<div class="a" style="left:585.3px;top:406.5px;width:17.2px;height:13.2px;background:#1b3047;border:1.3px solid #111a24;color:#c8ccd0;font-size:9px;font-weight:bold;text-align:center;line-height:10.6px">W</div>
<svg style="left:582.3px;top:0" width="50" height="493" viewBox="0 0 50 493">
<path d="M4 350.6 H8.6 L11.4 353.7 L8.6 356.8 H4 Z" fill="#c9cdd1"/><path d="M5 351.6 H7.4 V355.8 H5 Z" fill="#13171c"/><path d="M6.2 352.6 H8.4 L9.6 353.7 L8.4 354.8 H6.2 Z" fill="#c9cdd1"/><rect x="24.2" y="349.2" width="1.2" height="9.3" fill="#e6e8ea"/>
<rect x="22.8" y="375.09999999999997" width="6.6" height="1.2" fill="#4f6275"/><rect x="33.4" y="375.09999999999997" width="6.6" height="1.2" fill="#4f6275"/>
<rect x="22.8" y="388.0" width="6.6" height="1.2" fill="#4f6275"/><rect x="33.4" y="388.0" width="6.6" height="1.2" fill="#4f6275"/>
<rect x="22.8" y="398.9" width="6.6" height="1.2" fill="#e8eaec"/><rect x="33.4" y="398.9" width="6.6" height="1.2" fill="#e8eaec"/>
<rect x="22.8" y="405.9" width="6.6" height="1.2" fill="#4f6275"/><rect x="33.4" y="405.9" width="6.6" height="1.2" fill="#4f6275"/>
<rect x="22.8" y="412.79999999999995" width="6.6" height="1.2" fill="#4f6275"/><rect x="33.4" y="412.79999999999995" width="6.6" height="1.2" fill="#4f6275"/>
<rect x="22.8" y="422.59999999999997" width="6.6" height="1.2" fill="#4f6275"/><rect x="33.4" y="422.59999999999997" width="6.6" height="1.2" fill="#4f6275"/>
<rect x="22.8" y="431.2" width="6.6" height="1.2" fill="#4f6275"/><rect x="33.4" y="431.2" width="6.6" height="1.2" fill="#4f6275"/>
<rect x="22.8" y="444.9" width="6.6" height="1.2" fill="#4f6275"/><rect x="33.4" y="444.9" width="6.6" height="1.2" fill="#4f6275"/>
<rect x="22.8" y="454.79999999999995" width="6.6" height="1.2" fill="#4f6275"/><rect x="33.4" y="454.79999999999995" width="6.6" height="1.2" fill="#4f6275"/>
<rect x="30.7" y="361.6" width="2" height="108" fill="#050607"/>
<rect x="41.3" y="361.6" width="4.7" height="107.5" fill="#101316"/>
<rect x="41.8" y="365.3" width="3.7" height="1.2" fill="#e6e8ea"/>
<rect x="42.3" y="378.5" width="2.7" height="0.9" fill="#5b6066"/>
<rect x="42.3" y="390.5" width="2.7" height="0.9" fill="#5b6066"/>
<rect x="42.3" y="400.5" width="2.7" height="0.9" fill="#5b6066"/>
<rect x="42.3" y="409.5" width="2.7" height="0.9" fill="#5b6066"/>
<rect x="42.3" y="418" width="2.7" height="0.9" fill="#5b6066"/>
<rect x="42.3" y="428" width="2.7" height="0.9" fill="#5b6066"/>
<rect x="42.3" y="443.4" width="2.7" height="0.9" fill="#5b6066"/>
<rect x="42.3" y="453.2" width="2.7" height="0.9" fill="#5b6066"/>
<defs><linearGradient id="rc582" x1="0" y1="0" x2="0" y2="1"><stop offset="0" stop-color="#d8727a"/><stop offset="0.17" stop-color="#d06870"/><stop offset="0.2" stop-color="#bc5058"/><stop offset="0.5" stop-color="#b9525a"/><stop offset="0.54" stop-color="#dc7c82"/><stop offset="0.84" stop-color="#d6747b"/><stop offset="0.87" stop-color="#b4464e"/><stop offset="1" stop-color="#ad424a"/></linearGradient></defs>
<rect x="24.7" y="441.6" width="13.8" height="27.5" rx="1" fill="url(#rc582)"/>
<rect x="24.7" y="455.20000000000005" width="13.8" height="1.1" fill="#5a1a20"/>
<circle cx="11.9" cy="430" r="7" fill="#152536" stroke="#0f1a26" stroke-width="1"/>
<circle cx="11.4" cy="462.2" r="7" fill="#152536" stroke="#0f1a26" stroke-width="1"/>
<path d="M8.2 466 L10.2 458.2 L12.8 458.2 L14.8 466 Z" fill="none" stroke="#d8dbde" stroke-width="1"/><line x1="10.5" y1="465" x2="14.2" y2="459.5" stroke="#d8dbde" stroke-width="1"/>
<rect x="0.5" y="472.5" width="47.2" height="9.3" fill="#e07a83"/>
<path d="M40.5 473.8 L46 477.1 L40.5 480.4 Z" fill="#2b2225"/>
</svg>
<svg style="left:582.3px;top:0" width="50" height="493" viewBox="0 0 50 493"><path d="M9.1 430.6 L15.1 429.4 A3.1 3.3 0 1 0 14.4 432.6" fill="none" stroke="#d0d4d8" stroke-width="1.2"/></svg>
<div class="a" style="left:584.0999999999999px;top:472.5px;font-size:6.2px;line-height:9.3px;color:#3a2c30">1/2&nbsp;&nbsp;&nbsp;Stereo</div>
<div class="a" style="left:634.8px;top:331px;width:48.2px;height:150.8px;background:#1e3853;border:1px solid #2b4763;border-radius:3px"></div>
<div class="a" style="left:637.6999999999999px;top:333.6px;width:43.6px;height:11.2px;background:#13171c;border-radius:2px;color:#d0d3d6;font-size:6.8px;line-height:11.6px;text-align:center">C</div>
<div class="a" style="left:637.6999999999999px;top:348.2px;width:43.6px;height:11.2px;background:#13171c;border-radius:2px"></div>
<div class="a" style="left:648.3px;top:348.2px;font-size:6px;line-height:11.2px;color:#bfc3c8">3/4</div>
<div class="a" style="left:663.8px;top:348.2px;font-size:6px;line-height:11.2px;color:#bfc3c8">0.00</div>
<div class="a" style="left:637.8px;top:362.3px;width:17.2px;height:13.2px;background:#1b3047;border:1.3px solid #111a24;color:#c8ccd0;font-size:9px;font-weight:bold;text-align:center;line-height:10.6px">M</div>
<div class="a" style="left:637.8px;top:393.3px;width:17.2px;height:13.2px;background:#1b3047;border:1.3px solid #111a24;color:#c8ccd0;font-size:9px;font-weight:bold;text-align:center;line-height:10.6px">R</div>
<div class="a" style="left:637.8px;top:406.5px;width:17.2px;height:13.2px;background:#1b3047;border:1.3px solid #111a24;color:#c8ccd0;font-size:9px;font-weight:bold;text-align:center;line-height:10.6px">W</div>
<svg style="left:634.8px;top:0" width="50" height="493" viewBox="0 0 50 493">
<path d="M4 350.6 H8.6 L11.4 353.7 L8.6 356.8 H4 Z" fill="#c9cdd1"/><path d="M5 351.6 H7.4 V355.8 H5 Z" fill="#13171c"/><path d="M6.2 352.6 H8.4 L9.6 353.7 L8.4 354.8 H6.2 Z" fill="#c9cdd1"/><rect x="24.2" y="349.2" width="1.2" height="9.3" fill="#e6e8ea"/>
<rect x="22.8" y="375.09999999999997" width="6.6" height="1.2" fill="#4f6275"/><rect x="33.4" y="375.09999999999997" width="6.6" height="1.2" fill="#4f6275"/>
<rect x="22.8" y="388.0" width="6.6" height="1.2" fill="#4f6275"/><rect x="33.4" y="388.0" width="6.6" height="1.2" fill="#4f6275"/>
<rect x="22.8" y="398.9" width="6.6" height="1.2" fill="#e8eaec"/><rect x="33.4" y="398.9" width="6.6" height="1.2" fill="#e8eaec"/>
<rect x="22.8" y="405.9" width="6.6" height="1.2" fill="#4f6275"/><rect x="33.4" y="405.9" width="6.6" height="1.2" fill="#4f6275"/>
<rect x="22.8" y="412.79999999999995" width="6.6" height="1.2" fill="#4f6275"/><rect x="33.4" y="412.79999999999995" width="6.6" height="1.2" fill="#4f6275"/>
<rect x="22.8" y="422.59999999999997" width="6.6" height="1.2" fill="#4f6275"/><rect x="33.4" y="422.59999999999997" width="6.6" height="1.2" fill="#4f6275"/>
<rect x="22.8" y="431.2" width="6.6" height="1.2" fill="#4f6275"/><rect x="33.4" y="431.2" width="6.6" height="1.2" fill="#4f6275"/>
<rect x="22.8" y="444.9" width="6.6" height="1.2" fill="#4f6275"/><rect x="33.4" y="444.9" width="6.6" height="1.2" fill="#4f6275"/>
<rect x="22.8" y="454.79999999999995" width="6.6" height="1.2" fill="#4f6275"/><rect x="33.4" y="454.79999999999995" width="6.6" height="1.2" fill="#4f6275"/>
<rect x="30.7" y="361.6" width="2" height="108" fill="#050607"/>
<rect x="41.3" y="361.6" width="4.7" height="107.5" fill="#101316"/>
<rect x="41.7" y="384.5" width="1.8" height="84.5" fill="#4cc2ea"/><rect x="44" y="384.5" width="1.8" height="84.5" fill="#4cc2ea"/>
<rect x="41.7" y="374.2" width="3.9" height="1" fill="#4cc2ea"/>
<rect x="41.8" y="365.3" width="3.7" height="1.2" fill="#e6e8ea"/>
<rect x="42.3" y="378.5" width="2.7" height="0.9" fill="#5b6066"/>
<defs><linearGradient id="rc634" x1="0" y1="0" x2="0" y2="1"><stop offset="0" stop-color="#d8727a"/><stop offset="0.17" stop-color="#d06870"/><stop offset="0.2" stop-color="#bc5058"/><stop offset="0.5" stop-color="#b9525a"/><stop offset="0.54" stop-color="#dc7c82"/><stop offset="0.84" stop-color="#d6747b"/><stop offset="0.87" stop-color="#b4464e"/><stop offset="1" stop-color="#ad424a"/></linearGradient></defs>
<rect x="24.7" y="385.3" width="13.8" height="27.5" rx="1" fill="url(#rc634)"/>
<rect x="24.7" y="398.90000000000003" width="13.8" height="1.1" fill="#5a1a20"/>
<circle cx="11.4" cy="462.2" r="7" fill="#152536" stroke="#0f1a26" stroke-width="1"/>
<path d="M8.2 466 L10.2 458.2 L12.8 458.2 L14.8 466 Z" fill="none" stroke="#d8dbde" stroke-width="1"/><line x1="10.5" y1="465" x2="14.2" y2="459.5" stroke="#d8dbde" stroke-width="1"/>
<rect x="0.5" y="472.5" width="47.2" height="9.3" fill="#e07a83"/>
<path d="M40.5 473.8 L46 477.1 L40.5 480.4 Z" fill="#2b2225"/>
</svg>
<div class="a" style="left:636.5999999999999px;top:472.5px;font-size:6.2px;line-height:9.3px;color:#3a2c30">3/4&nbsp;&nbsp;&nbsp;Stereo</div>
<div class="a" style="left:686px;top:331px;width:30px;height:150.8px;background:#1e3b57;border:1px solid #2b4763;border-radius:3px"></div>
<div class="a" style="left:689.4px;top:362.3px;width:16.7px;height:13.2px;background:#1b3047;border:1.3px solid #111a24;color:#c8ccd0;font-size:9px;font-weight:bold;text-align:center;line-height:10.6px">M</div>
<div class="a" style="left:689.4px;top:375.5px;width:16.7px;height:13.2px;background:#1b3047;border:1.3px solid #111a24;color:#c8ccd0;font-size:9px;font-weight:bold;text-align:center;line-height:10.6px">S</div>
<div class="a" style="left:689.4px;top:393.3px;width:16.7px;height:13.2px;background:#1b3047;border:1.3px solid #111a24;color:#c8ccd0;font-size:9px;font-weight:bold;text-align:center;line-height:10.6px">R</div>
<div class="a" style="left:689.4px;top:406.5px;width:16.7px;height:13.2px;background:#1b3047;border:1.3px solid #111a24;color:#c8ccd0;font-size:9px;font-weight:bold;text-align:center;line-height:10.6px">W</div>
<svg style="left:686px;top:0" width="24" height="493" viewBox="0 0 24 493"><circle cx="11.9" cy="446" r="7" fill="#55bbee" stroke="#0f1a26" stroke-width="1"/><path d="M8.6 444.4 H10.3 L13.9 441.8 V450.2 L10.3 447.6 H8.6 Z" fill="#1f4e6e"/><circle cx="11.9" cy="462.2" r="7" fill="#152536" stroke="#0f1a26" stroke-width="1"/><circle cx="11.9" cy="462.2" r="4.3" fill="#e05252"/><rect x="0.8" y="472.5" width="24" height="9.3" fill="#5a9dd0"/></svg>
<div class="a" style="left:689px;top:472.5px;font-size:6.2px;line-height:9.3px;color:#203040">Global</div>
<div class="a" style="left:260px;top:484.8px;width:190px;height:3.8px;background:#5b5d61;border-radius:2px"></div>
</body></html>
